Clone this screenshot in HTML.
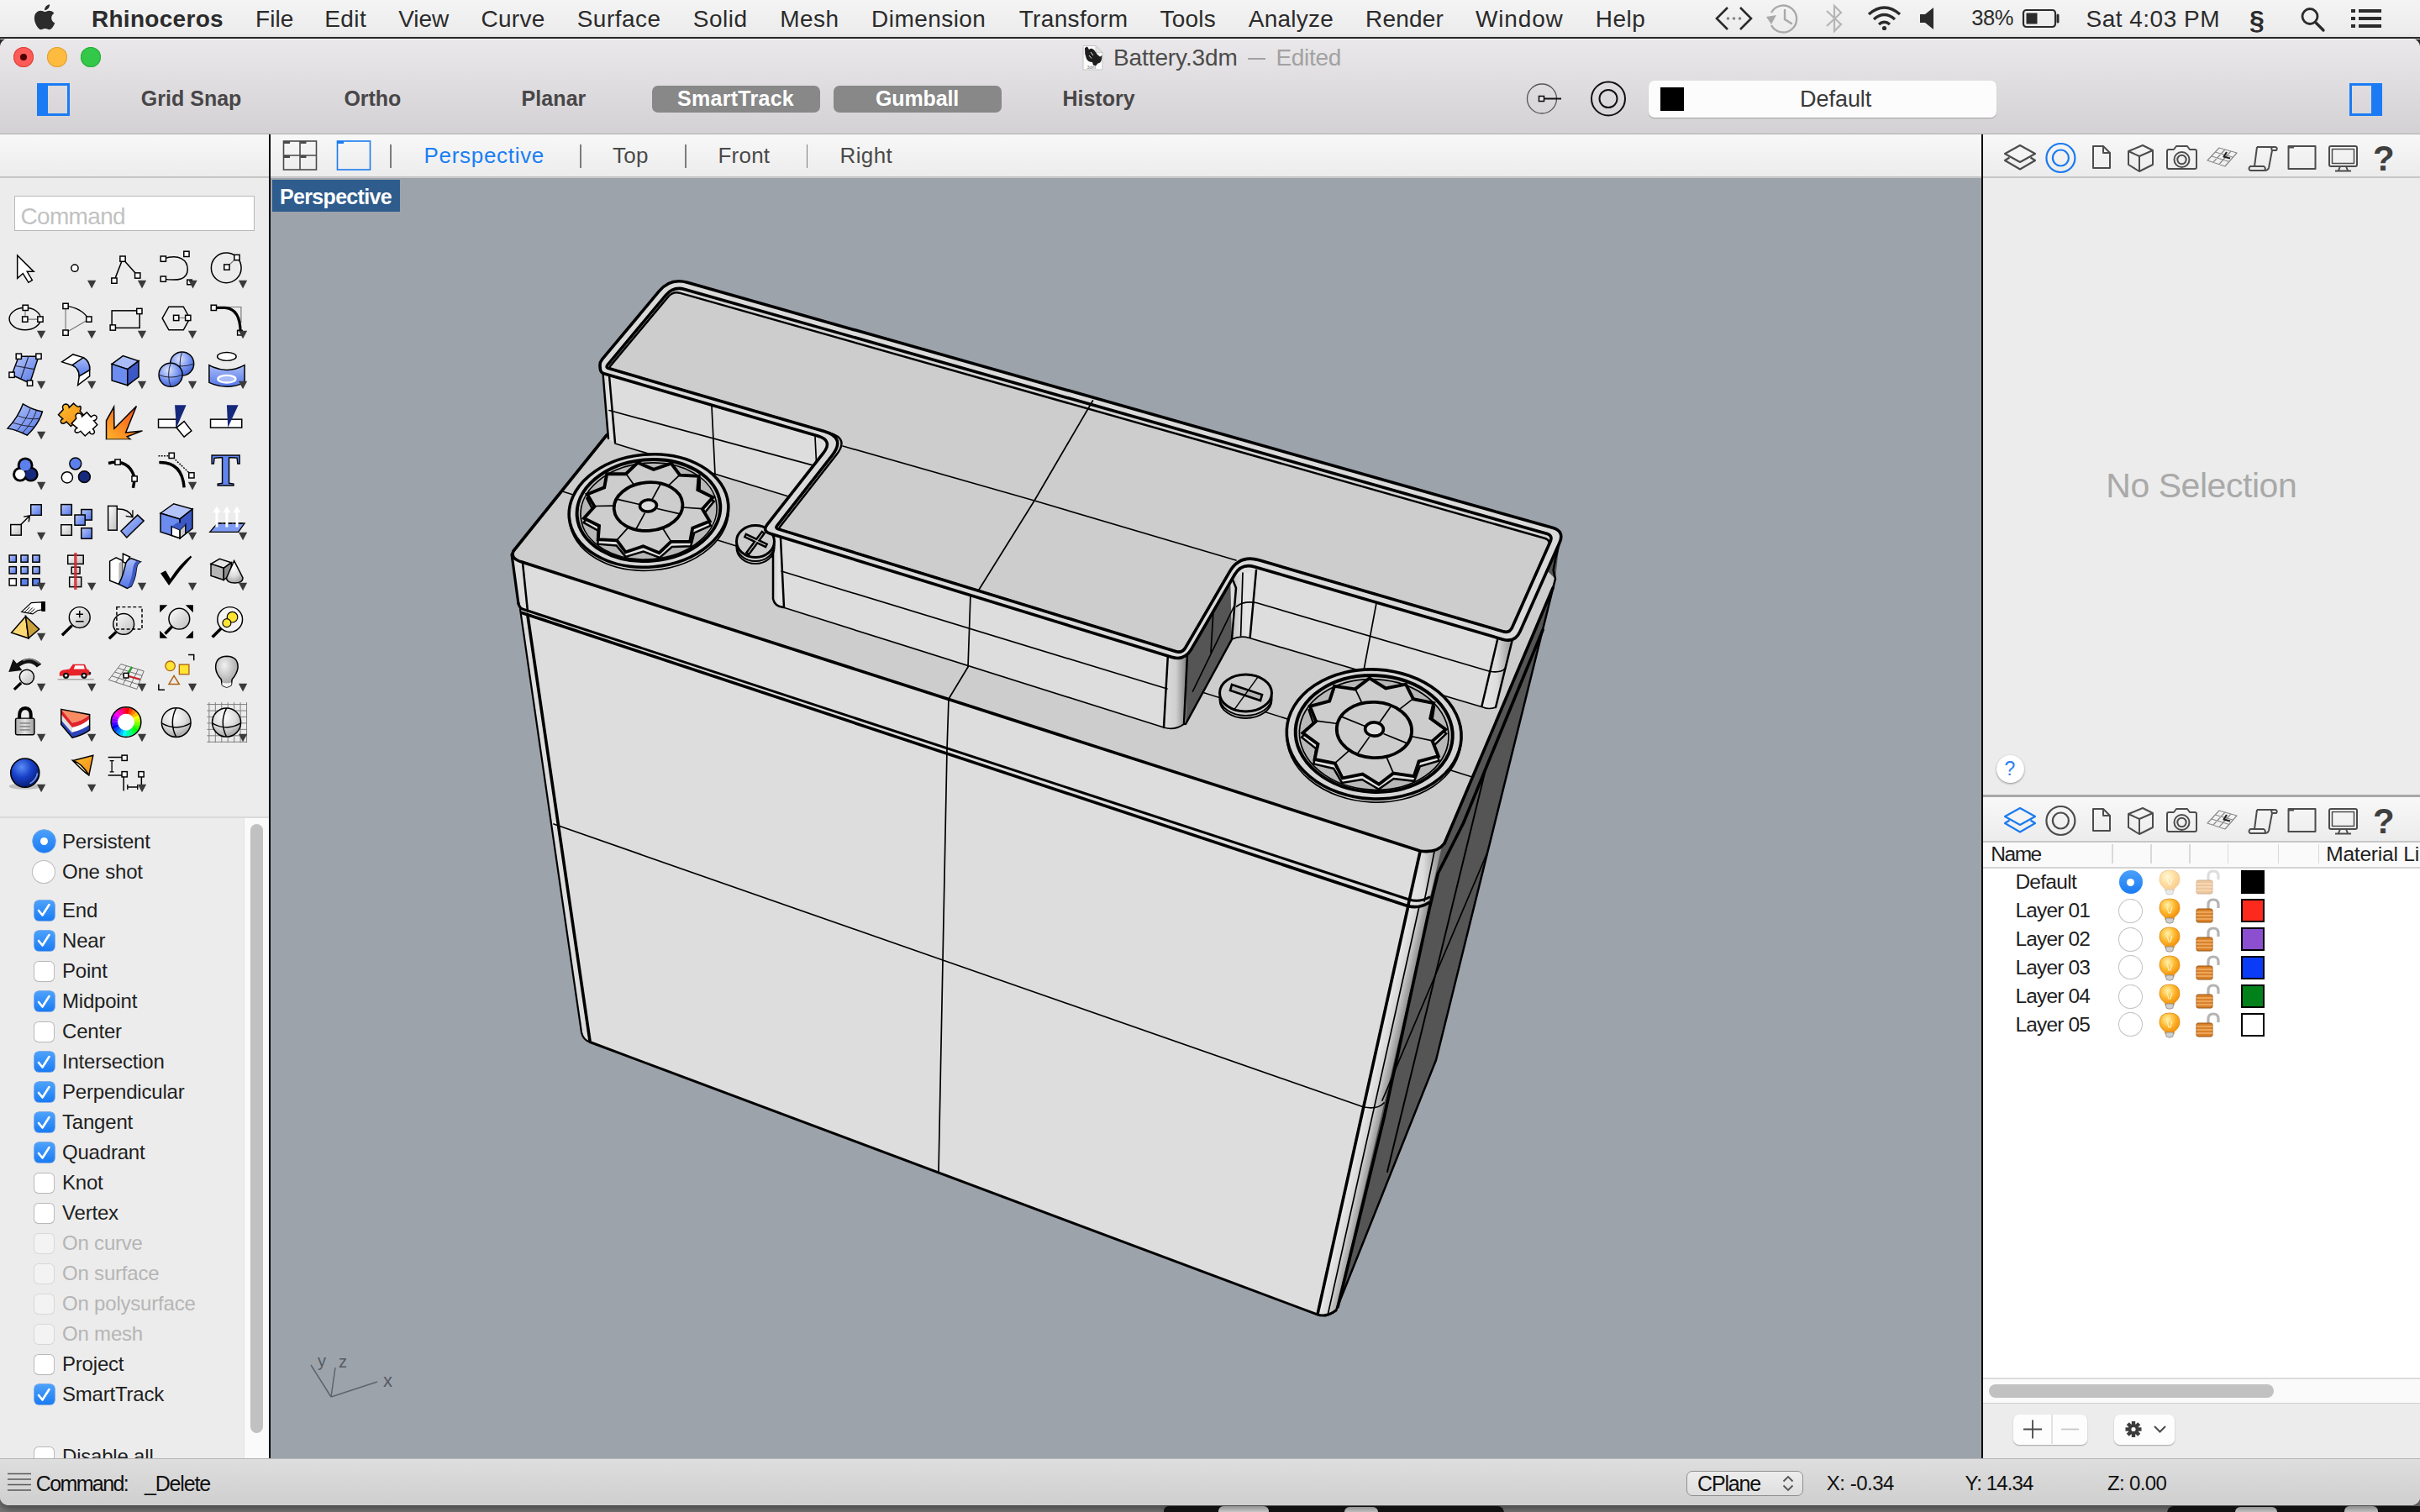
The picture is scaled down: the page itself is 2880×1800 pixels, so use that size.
<!DOCTYPE html>
<html><head><meta charset="utf-8"><title>Rhinoceros - Battery.3dm</title>
<style>
html,body{margin:0;padding:0}
body{width:2880px;height:1800px;position:relative;overflow:hidden;background:#2b2b2b;font-family:"Liberation Sans",sans-serif;}
.abs{position:absolute}
.t{position:absolute;white-space:pre;line-height:1.2}
svg{display:block;overflow:visible}
</style></head><body>

<div class="abs" style="left:0px;top:1780px;width:2880px;height:20px;background:#777777"></div>
<div class="abs" style="left:1385px;top:1792.5px;width:405px;height:8px;background:#161616;border-radius:10px 14px 0 0"></div>
<div class="abs" style="left:1450px;top:1793px;width:60px;height:7px;background:#d8d8d8;border-radius:6px 6px 0 0"></div>
<div class="abs" style="left:1600px;top:1794px;width:40px;height:6px;background:#cfcfcf;border-radius:6px 6px 0 0"></div>
<div class="abs" style="left:2579px;top:1792.5px;width:301px;height:8px;background:#161616;border-radius:12px 0 0 0"></div>
<div class="abs" style="left:2660px;top:1794px;width:50px;height:6px;background:#d0d0d0;border-radius:6px 6px 0 0"></div>
<div class="abs" style="left:2790px;top:1793px;width:40px;height:7px;background:#d0d0d0;border-radius:6px 6px 0 0"></div>
<div class="abs" style="left:0px;top:0px;width:2880px;height:44px;background:linear-gradient(#f4f4f4,#ebebeb)"></div>
<div class="abs" style="left:0px;top:44px;width:2880px;height:2px;background:#2a2a2a"></div>
<span id="t_0" class="t" style="left:108.9px;top:5.8px;font-size:28px;font-weight:700;color:#2b2b2b;letter-spacing:0.307px;">Rhinoceros</span>
<span id="t_1" class="t" style="left:304.0px;top:5.8px;font-size:28px;font-weight:400;color:#2b2b2b;letter-spacing:0.044px;">File</span>
<span id="t_2" class="t" style="left:386.2px;top:5.8px;font-size:28px;font-weight:400;color:#2b2b2b;letter-spacing:0.438px;">Edit</span>
<span id="t_3" class="t" style="left:474.2px;top:5.8px;font-size:28px;font-weight:400;color:#2b2b2b;letter-spacing:-0.022px;">View</span>
<span id="t_4" class="t" style="left:572.4px;top:5.8px;font-size:28px;font-weight:400;color:#2b2b2b;letter-spacing:0.299px;">Curve</span>
<span id="t_5" class="t" style="left:686.7px;top:5.8px;font-size:28px;font-weight:400;color:#2b2b2b;letter-spacing:0.486px;">Surface</span>
<span id="t_6" class="t" style="left:824.7px;top:5.8px;font-size:28px;font-weight:400;color:#2b2b2b;letter-spacing:0.527px;">Solid</span>
<span id="t_7" class="t" style="left:928.2px;top:5.8px;font-size:28px;font-weight:400;color:#2b2b2b;letter-spacing:0.458px;">Mesh</span>
<span id="t_8" class="t" style="left:1037.1px;top:5.8px;font-size:28px;font-weight:400;color:#2b2b2b;letter-spacing:0.447px;">Dimension</span>
<span id="t_9" class="t" style="left:1212.7px;top:5.8px;font-size:28px;font-weight:400;color:#2b2b2b;letter-spacing:0.350px;">Transform</span>
<span id="t_10" class="t" style="left:1380.5px;top:5.8px;font-size:28px;font-weight:400;color:#2b2b2b;letter-spacing:0.225px;">Tools</span>
<span id="t_11" class="t" style="left:1485.8px;top:5.8px;font-size:28px;font-weight:400;color:#2b2b2b;letter-spacing:0.225px;">Analyze</span>
<span id="t_12" class="t" style="left:1625.0px;top:5.8px;font-size:28px;font-weight:400;color:#2b2b2b;letter-spacing:0.176px;">Render</span>
<span id="t_13" class="t" style="left:1756.0px;top:5.8px;font-size:28px;font-weight:400;color:#2b2b2b;letter-spacing:0.851px;">Window</span>
<span id="t_14" class="t" style="left:1898.8px;top:5.8px;font-size:28px;font-weight:400;color:#2b2b2b;letter-spacing:0.477px;">Help</span>
<span id="t_15" class="t" style="left:2346.2px;top:6.0px;font-size:25.5px;font-weight:400;color:#2b2b2b;letter-spacing:-0.349px;">38%</span>
<span id="t_16" class="t" style="left:2482.5px;top:5.8px;font-size:28px;font-weight:400;color:#2b2b2b;letter-spacing:0.491px;">Sat 4:03 PM</span>
<span id="t_17" class="t" style="left:2677.0px;top:4.6px;font-size:32px;font-weight:700;color:#2b2b2b;letter-spacing:-1.797px;">§</span>
<div class="abs" style="left:0;top:46px;width:2880px;height:1745.5px;background:#ececec;border-radius:10px 10px 10px 10px;overflow:hidden;box-shadow:0 4px 10px rgba(0,0,0,.45)">
</div>
<div class="abs" style="left:0px;top:46px;width:2880px;height:113px;background:linear-gradient(#eae8ea,#d3d1d3);border-radius:10px 10px 0 0"></div>
<div class="abs" style="left:0px;top:46px;width:2880px;height:1px;background:#f6f6f6;border-radius:10px 10px 0 0;opacity:.8"></div>
<div class="abs" style="left:0px;top:159px;width:2880px;height:1px;background:#aeaeae"></div>
<div class="abs" style="left:16px;top:56px;width:24px;height:24px;border-radius:50%;background:#fc5b57;box-shadow:inset 0 0 0 1px #df3e39"></div>
<div class="abs" style="left:56px;top:56px;width:24px;height:24px;border-radius:50%;background:#fdbc40;box-shadow:inset 0 0 0 1px #de9f34"></div>
<div class="abs" style="left:96px;top:56px;width:24px;height:24px;border-radius:50%;background:#34c84a;box-shadow:inset 0 0 0 1px #27aa35"></div>
<div class="abs" style="left:24px;top:64px;width:8px;height:8px;border-radius:50%;background:#4c0102"></div>
<span id="t_18" class="t" style="left:1325.0px;top:52.1px;font-size:28px;font-weight:400;color:#4b4b4b;letter-spacing:-0.107px;">Battery.3dm</span>
<div class="abs" style="left:1484.6px;top:68.5px;width:21px;height:2px;background:#a3a1a3"></div>
<span id="t_19" class="t" style="left:1518.5px;top:52.1px;font-size:28px;font-weight:400;color:#a2a2a2;letter-spacing:-0.318px;">Edited</span>
<div class="abs" style="left:44px;top:99px;width:39px;height:39px;border:3px solid #1a7bf5;box-sizing:border-box;background:linear-gradient(90deg,#1a7bf5 0,#1a7bf5 10px,transparent 10px)"></div>
<div class="abs" style="left:2796px;top:99px;width:39px;height:39px;border:3px solid #1a7bf5;box-sizing:border-box;background:linear-gradient(270deg,#1a7bf5 0,#1a7bf5 10px,transparent 10px)"></div>
<span id="t_20" class="t" style="left:167.8px;top:101.8px;font-size:25px;font-weight:700;color:#484648;letter-spacing:0.015px;">Grid Snap</span>
<span id="t_21" class="t" style="left:409.4px;top:101.8px;font-size:25px;font-weight:700;color:#484648;letter-spacing:-0.049px;">Ortho</span>
<span id="t_22" class="t" style="left:620.6px;top:101.8px;font-size:25px;font-weight:700;color:#484648;letter-spacing:0.060px;">Planar</span>
<div class="abs" style="left:776px;top:102px;width:200px;height:32px;background:#888888;border-radius:7px"></div>
<span id="t_23" class="t" style="left:806.0px;top:101.8px;font-size:25px;font-weight:700;color:#fff;letter-spacing:0.280px;">SmartTrack</span>
<div class="abs" style="left:992px;top:102px;width:200px;height:32px;background:#888888;border-radius:7px"></div>
<span id="t_24" class="t" style="left:1042.0px;top:101.8px;font-size:25px;font-weight:700;color:#fff;letter-spacing:-0.145px;">Gumball</span>
<span id="t_25" class="t" style="left:1264.4px;top:101.8px;font-size:25px;font-weight:700;color:#484648;letter-spacing:0.023px;">History</span>
<div class="abs" style="left:1962px;top:96px;width:414px;height:44px;background:#fcfcfc;border-radius:7px;box-shadow:0 1px 1px rgba(0,0,0,.25)"></div>
<div class="abs" style="left:1976px;top:104px;width:28px;height:28px;background:#000"></div>
<span id="t_26" class="t" style="left:2142.0px;top:102.4px;font-size:27px;font-weight:400;color:#3a3a3a;letter-spacing:-0.037px;">Default</span>
<div class="abs" style="left:0px;top:160px;width:2880px;height:50px;background:linear-gradient(#f8f8f8,#ececec)"></div>
<div class="abs" style="left:0px;top:210px;width:2880px;height:2px;background:linear-gradient(#b9b9b9,#cfcfcf)"></div>
<span id="t_27" class="t" style="left:504.6px;top:170.3px;font-size:26px;font-weight:400;color:#1a7ff4;letter-spacing:0.687px;">Perspective</span>
<span id="t_28" class="t" style="left:729.0px;top:170.3px;font-size:26px;font-weight:400;color:#4a4a4a;letter-spacing:0.293px;">Top</span>
<span id="t_29" class="t" style="left:854.5px;top:170.3px;font-size:26px;font-weight:400;color:#4a4a4a;letter-spacing:0.222px;">Front</span>
<span id="t_30" class="t" style="left:999.6px;top:170.3px;font-size:26px;font-weight:400;color:#4a4a4a;letter-spacing:0.359px;">Right</span>
<div class="abs" style="left:464px;top:172px;width:1.5px;height:28px;background:#7c7c7c"></div>
<div class="abs" style="left:690px;top:172px;width:1.5px;height:28px;background:#7c7c7c"></div>
<div class="abs" style="left:815px;top:172px;width:1.5px;height:28px;background:#7c7c7c"></div>
<div class="abs" style="left:959.5px;top:172px;width:1.5px;height:28px;background:#7c7c7c"></div>
<svg class="abs" style="left:0;top:0" width="2880" height="212" viewBox="0 0 2880 212"><g transform="translate(41.5,4.5) scale(1.12)" fill="#2b2b2b"><path d="M17.6,15.1c0-3.4,2.8-5,2.9-5.1c-1.6-2.3-4-2.6-4.9-2.7c-2.1-0.2-4,1.2-5.1,1.2c-1,0-2.7-1.2-4.4-1.1C3.8,7.4,1.700,8.700,0.6,10.6c-2.400,4.100-0.600,10.200,1.700,13.500c1.100,1.600,2.500,3.500,4.200,3.400c1.700-0.100,2.300-1.100,4.400-1.100c2,0,2.600,1.100,4.400,1.100c1.800,0,3-1.600,4.100-3.300c1.300-1.900,1.800-3.700,1.900-3.800C21.200,20.400,17.700,19,17.600,15.100z"/><path d="M14.300,5c0.900-1.100,1.600-2.700,1.400-4.300c-1.300,0.100-3,0.900-3.900,2c-0.900,1-1.600,2.600-1.400,4.200C11.800,7,13.300,6.100,14.300,5z"/></g><g fill="none" stroke="#2b2b2b" stroke-width="2.6"><path d="M2056,9 L2043,22 L2056,35 M2071,9 L2084,22 L2071,35"/></g><g fill="#2b2b2b" opacity=".55"><circle cx="2056.5" cy="22" r="1.8"/><circle cx="2063.5" cy="22" r="1.8"/><circle cx="2070.500" cy="22" r="1.8"/></g><g fill="none" stroke="#a9a9a9" stroke-width="2.4"><path d="M2108,15 A16,16 0 1 1 2108,30"/><path d="M2124,12 L2124,23 L2132,28" stroke-linecap="round"/></g><path d="M2102,20 L2114,18 L2108,29 Z" fill="#a9a9a9"/><path d="M2174,13 L2191,29 L2183,37 L2183,7 L2191,15 L2174,31" fill="none" stroke="#b5b5b5" stroke-width="2.2"/><g fill="none" stroke="#2b2b2b" stroke-width="3.400"><path d="M2224,17 Q2242.5,1 2261,17"/><path d="M2230,23 Q2242.500,12 2255,23"/><path d="M2236,29 Q2242.500,23.5 2249,29"/></g><circle cx="2242.5" cy="33.500" r="2.6" fill="#2b2b2b"/><path d="M2285,17 L2291,17 L2301,9 L2301,35 L2291,27 L2285,27 Z" fill="#2b2b2b"/><rect x="2408" y="12" width="38" height="20" rx="3.500" fill="none" stroke="#2b2b2b" stroke-width="2.2"/><rect x="2411.500" y="15.500" width="13" height="13" fill="#2b2b2b"/><path d="M2449,18 L2449,26" stroke="#2b2b2b" stroke-width="3" stroke-linecap="round"/><circle cx="2749" cy="19.500" r="9" fill="none" stroke="#2b2b2b" stroke-width="2.800"/><path d="M2755.500,26.500 L2765,36" stroke="#2b2b2b" stroke-width="3.400" stroke-linecap="round"/><g fill="#2b2b2b"><rect x="2798" y="11" width="5" height="4"/><rect x="2807" y="11" width="27" height="4"/><rect x="2798" y="20" width="5" height="4"/><rect x="2807" y="20" width="27" height="4"/><rect x="2798" y="29" width="5" height="4"/><rect x="2807" y="29" width="27" height="4"/></g><g><path d="M1289,54.500 L1304,54.500 L1312,62.500 L1312,83 L1289,83 Z" fill="#fbfbfb" stroke="#c4c4c4" stroke-width="1"/><path d="M1304,54.500 L1304,62.500 L1312,62.500 Z" fill="#e4e4e4" stroke="#c4c4c4" stroke-width=".8"/><path d="M1291,57 L1294,55.500 L1296,59 Q1299,56.500 1302,59.500 L1306,65 L1309,67.500 L1311.500,66 L1311,71 Q1310,75 1306.500,75.500 L1304,78.500 L1301,77.500 L1300,74 Q1295,74 1293,70 Q1290.500,64 1291,57 Z" fill="#1e1e1e"/><path d="M1298,62 L1301,66 M1296,66 L1299,69.500" stroke="#e8e8e8" stroke-width="1"/><text x="1293.500" y="82" font-family="Liberation Sans,sans-serif" font-size="5.500" fill="#777">3dm</text></g><g fill="none" stroke="#111"><circle cx="1835" cy="117.500" r="17.500" stroke-width="1.300" stroke="#555"/><path d="M1838,117.500 L1858,117.500" stroke-width="2"/><rect x="1831.500" y="114.500" width="6" height="6" stroke-width="1.600" fill="#eee"/><circle cx="1914" cy="117.500" r="20" stroke-width="2"/><circle cx="1914" cy="117.500" r="10.500" stroke-width="2"/></g><g fill="none" stroke="#4a4a4a" stroke-width="1.600"><rect x="337.500" y="168" width="39" height="34"/><path d="M357,168 L357,202 M337.500,185 L376.500,185"/><path d="M338,169.500 L345,169.500 M357.500,169.500 L364.500,169.500 M338,186.500 L345,186.500 M357.500,186.500 L364.500,186.500" stroke-width="3"/></g><g fill="none" stroke="#1a7bf0" stroke-width="1.600"><rect x="401.500" y="168" width="39" height="34"/><path d="M402,169.500 L409,169.500" stroke-width="3"/></g></svg>
<div class="abs" style="left:0px;top:212px;width:320px;height:1524px;background:#ececec"></div>
<div class="abs" style="left:17px;top:233px;width:286px;height:42px;background:#fff;border:1.5px solid #b8b8b8;box-sizing:border-box"></div>
<span id="t_31" class="t" style="left:24.5px;top:240.5px;font-size:28px;font-weight:400;color:#c2c2c2;letter-spacing:-0.667px;">Command</span>
<div class="abs" style="left:0px;top:972px;width:320px;height:2px;background:#dadada"></div>
<div class="abs" style="left:0;top:974px;width:320px;height:762px;overflow:hidden">
<span id="t_32" class="t" style="left:74.0px;top:13.8px;font-size:24px;font-weight:400;color:#1f1f1f;letter-spacing:0.000px;letter-spacing:-0.2px;">Persistent</span>
<div class="abs" style="left:38.5px;top:14.200000000000045px;width:27px;height:27px;border-radius:50%;background:linear-gradient(#4ba0fa,#1a7bf3);box-shadow:0 0 0 .5px #1a6fe0"></div>
<div class="abs" style="left:47.5px;top:23.200000000000045px;width:9px;height:9px;border-radius:50%;background:#fff"></div>
<span id="t_33" class="t" style="left:74.0px;top:50.4px;font-size:24px;font-weight:400;color:#1f1f1f;letter-spacing:0.000px;letter-spacing:-0.2px;">One shot</span>
<div class="abs" style="left:39px;top:51.299999999999955px;width:26px;height:26px;border-radius:50%;background:#fff;box-shadow:0 0 0 1px #bdbdbd, 0 1px 1px rgba(0,0,0,.2)"></div>
<span id="t_34" class="t" style="left:74.0px;top:95.9px;font-size:24px;font-weight:400;color:#1f1f1f;letter-spacing:0.000px;letter-spacing:-0.2px;">End</span>
<div class="abs" style="left:40.5px;top:97.79999999999995px;width:24px;height:24px;border-radius:5px;background:linear-gradient(#4da2fb,#1a7bf3);box-shadow:0 0 0 .5px #1a6fe0"></div>
<svg class="abs" style="left:40px;top:97.29999999999995px" width="25" height="25" viewBox="0 0 25 25"><path d="M6,13 L10.5,18.5 L18.5,6" fill="none" stroke="#fff" stroke-width="2.6" stroke-linecap="round" stroke-linejoin="round"/></svg>
<span id="t_35" class="t" style="left:74.0px;top:131.9px;font-size:24px;font-weight:400;color:#1f1f1f;letter-spacing:0.000px;letter-spacing:-0.2px;">Near</span>
<div class="abs" style="left:40.5px;top:133.79999999999995px;width:24px;height:24px;border-radius:5px;background:linear-gradient(#4da2fb,#1a7bf3);box-shadow:0 0 0 .5px #1a6fe0"></div>
<svg class="abs" style="left:40px;top:133.29999999999995px" width="25" height="25" viewBox="0 0 25 25"><path d="M6,13 L10.5,18.5 L18.5,6" fill="none" stroke="#fff" stroke-width="2.6" stroke-linecap="round" stroke-linejoin="round"/></svg>
<span id="t_36" class="t" style="left:74.0px;top:168.4px;font-size:24px;font-weight:400;color:#1f1f1f;letter-spacing:0.000px;letter-spacing:-0.2px;">Point</span>
<div class="abs" style="left:41px;top:170.79999999999995px;width:23px;height:23px;border-radius:5px;background:#fff;box-shadow:0 0 0 1px #b9b9b9, 0 1px 1px rgba(0,0,0,.15)"></div>
<span id="t_37" class="t" style="left:74.0px;top:204.4px;font-size:24px;font-weight:400;color:#1f1f1f;letter-spacing:0.000px;letter-spacing:-0.2px;">Midpoint</span>
<div class="abs" style="left:40.5px;top:206.29999999999995px;width:24px;height:24px;border-radius:5px;background:linear-gradient(#4da2fb,#1a7bf3);box-shadow:0 0 0 .5px #1a6fe0"></div>
<svg class="abs" style="left:40px;top:205.79999999999995px" width="25" height="25" viewBox="0 0 25 25"><path d="M6,13 L10.5,18.5 L18.5,6" fill="none" stroke="#fff" stroke-width="2.6" stroke-linecap="round" stroke-linejoin="round"/></svg>
<span id="t_38" class="t" style="left:74.0px;top:240.3px;font-size:24px;font-weight:400;color:#1f1f1f;letter-spacing:0.000px;letter-spacing:-0.2px;">Center</span>
<div class="abs" style="left:41px;top:242.70000000000005px;width:23px;height:23px;border-radius:5px;background:#fff;box-shadow:0 0 0 1px #b9b9b9, 0 1px 1px rgba(0,0,0,.15)"></div>
<span id="t_39" class="t" style="left:74.0px;top:276.3px;font-size:24px;font-weight:400;color:#1f1f1f;letter-spacing:0.000px;letter-spacing:-0.2px;">Intersection</span>
<div class="abs" style="left:40.5px;top:278.20000000000005px;width:24px;height:24px;border-radius:5px;background:linear-gradient(#4da2fb,#1a7bf3);box-shadow:0 0 0 .5px #1a6fe0"></div>
<svg class="abs" style="left:40px;top:277.70000000000005px" width="25" height="25" viewBox="0 0 25 25"><path d="M6,13 L10.5,18.5 L18.5,6" fill="none" stroke="#fff" stroke-width="2.6" stroke-linecap="round" stroke-linejoin="round"/></svg>
<span id="t_40" class="t" style="left:74.0px;top:312.3px;font-size:24px;font-weight:400;color:#1f1f1f;letter-spacing:0.000px;letter-spacing:-0.2px;">Perpendicular</span>
<div class="abs" style="left:40.5px;top:314.20000000000005px;width:24px;height:24px;border-radius:5px;background:linear-gradient(#4da2fb,#1a7bf3);box-shadow:0 0 0 .5px #1a6fe0"></div>
<svg class="abs" style="left:40px;top:313.70000000000005px" width="25" height="25" viewBox="0 0 25 25"><path d="M6,13 L10.5,18.5 L18.5,6" fill="none" stroke="#fff" stroke-width="2.6" stroke-linecap="round" stroke-linejoin="round"/></svg>
<span id="t_41" class="t" style="left:74.0px;top:348.3px;font-size:24px;font-weight:400;color:#1f1f1f;letter-spacing:0.000px;letter-spacing:-0.2px;">Tangent</span>
<div class="abs" style="left:40.5px;top:350.20000000000005px;width:24px;height:24px;border-radius:5px;background:linear-gradient(#4da2fb,#1a7bf3);box-shadow:0 0 0 .5px #1a6fe0"></div>
<svg class="abs" style="left:40px;top:349.70000000000005px" width="25" height="25" viewBox="0 0 25 25"><path d="M6,13 L10.5,18.5 L18.5,6" fill="none" stroke="#fff" stroke-width="2.6" stroke-linecap="round" stroke-linejoin="round"/></svg>
<span id="t_42" class="t" style="left:74.0px;top:384.2px;font-size:24px;font-weight:400;color:#1f1f1f;letter-spacing:0.000px;letter-spacing:-0.2px;">Quadrant</span>
<div class="abs" style="left:40.5px;top:386.0999999999999px;width:24px;height:24px;border-radius:5px;background:linear-gradient(#4da2fb,#1a7bf3);box-shadow:0 0 0 .5px #1a6fe0"></div>
<svg class="abs" style="left:40px;top:385.5999999999999px" width="25" height="25" viewBox="0 0 25 25"><path d="M6,13 L10.5,18.5 L18.5,6" fill="none" stroke="#fff" stroke-width="2.6" stroke-linecap="round" stroke-linejoin="round"/></svg>
<span id="t_43" class="t" style="left:74.0px;top:420.2px;font-size:24px;font-weight:400;color:#1f1f1f;letter-spacing:0.000px;letter-spacing:-0.2px;">Knot</span>
<div class="abs" style="left:41px;top:422.5999999999999px;width:23px;height:23px;border-radius:5px;background:#fff;box-shadow:0 0 0 1px #b9b9b9, 0 1px 1px rgba(0,0,0,.15)"></div>
<span id="t_44" class="t" style="left:74.0px;top:456.2px;font-size:24px;font-weight:400;color:#1f1f1f;letter-spacing:0.000px;letter-spacing:-0.2px;">Vertex</span>
<div class="abs" style="left:41px;top:458.5999999999999px;width:23px;height:23px;border-radius:5px;background:#fff;box-shadow:0 0 0 1px #b9b9b9, 0 1px 1px rgba(0,0,0,.15)"></div>
<span id="t_45" class="t" style="left:74.0px;top:492.1px;font-size:24px;font-weight:400;color:#b5b5b5;letter-spacing:0.000px;letter-spacing:-0.2px;">On curve</span>
<div class="abs" style="left:41px;top:494.5px;width:23px;height:23px;border-radius:5px;background:#f3f3f3;box-shadow:0 0 0 1px #d8d8d8"></div>
<span id="t_46" class="t" style="left:74.0px;top:528.1px;font-size:24px;font-weight:400;color:#b5b5b5;letter-spacing:0.000px;letter-spacing:-0.2px;">On surface</span>
<div class="abs" style="left:41px;top:530.5px;width:23px;height:23px;border-radius:5px;background:#f3f3f3;box-shadow:0 0 0 1px #d8d8d8"></div>
<span id="t_47" class="t" style="left:74.0px;top:564.1px;font-size:24px;font-weight:400;color:#b5b5b5;letter-spacing:0.000px;letter-spacing:-0.2px;">On polysurface</span>
<div class="abs" style="left:41px;top:566.5px;width:23px;height:23px;border-radius:5px;background:#f3f3f3;box-shadow:0 0 0 1px #d8d8d8"></div>
<span id="t_48" class="t" style="left:74.0px;top:600.1px;font-size:24px;font-weight:400;color:#b5b5b5;letter-spacing:0.000px;letter-spacing:-0.2px;">On mesh</span>
<div class="abs" style="left:41px;top:602.5px;width:23px;height:23px;border-radius:5px;background:#f3f3f3;box-shadow:0 0 0 1px #d8d8d8"></div>
<span id="t_49" class="t" style="left:74.0px;top:636.1px;font-size:24px;font-weight:400;color:#1f1f1f;letter-spacing:0.000px;letter-spacing:-0.2px;">Project</span>
<div class="abs" style="left:41px;top:638.5px;width:23px;height:23px;border-radius:5px;background:#fff;box-shadow:0 0 0 1px #b9b9b9, 0 1px 1px rgba(0,0,0,.15)"></div>
<span id="t_50" class="t" style="left:74.0px;top:672.1px;font-size:24px;font-weight:400;color:#1f1f1f;letter-spacing:0.000px;letter-spacing:-0.2px;">SmartTrack</span>
<div class="abs" style="left:40.5px;top:674px;width:24px;height:24px;border-radius:5px;background:linear-gradient(#4da2fb,#1a7bf3);box-shadow:0 0 0 .5px #1a6fe0"></div>
<svg class="abs" style="left:40px;top:673.5px" width="25" height="25" viewBox="0 0 25 25"><path d="M6,13 L10.5,18.5 L18.5,6" fill="none" stroke="#fff" stroke-width="2.6" stroke-linecap="round" stroke-linejoin="round"/></svg>
<span id="t_51" class="t" style="left:74.0px;top:746.1px;font-size:24px;font-weight:400;color:#1f1f1f;letter-spacing:0.000px;letter-spacing:-0.2px;">Disable all</span>
<div class="abs" style="left:41px;top:748.5px;width:23px;height:23px;border-radius:5px;background:#fff;box-shadow:0 0 0 1px #b9b9b9, 0 1px 1px rgba(0,0,0,.15)"></div>
</div>
<div class="abs" style="left:290px;top:974px;width:30px;height:762px;background:#fafafa;border-left:1px solid #e3e3e3;box-sizing:border-box"></div>
<div class="abs" style="left:298px;top:981px;width:15px;height:725px;background:#c1c1c1;border-radius:8px"></div>
<svg class="abs" style="left:0;top:285px" width="320" height="690" viewBox="0 285 320 690"><defs><linearGradient id="ib" x1="0" y1="0" x2="1" y2="1"><stop offset="0" stop-color="#b9c8fa"/><stop offset="1" stop-color="#4f74e6"/></linearGradient><linearGradient id="ib2" x1="0" y1="0" x2="0" y2="1"><stop offset="0" stop-color="#a9bcf8"/><stop offset="1" stop-color="#5577e8"/></linearGradient><linearGradient id="ig" x1="0" y1="0" x2="1" y2="1"><stop offset="0" stop-color="#ffffff"/><stop offset="1" stop-color="#bdbdbd"/></linearGradient><linearGradient id="ior" x1="0" y1="1" x2="1" y2="0"><stop offset="0" stop-color="#ffb52a"/><stop offset="1" stop-color="#f4451b"/></linearGradient><linearGradient id="ior2" x1="0" y1="0" x2="1" y2="1"><stop offset="0" stop-color="#ffc02e"/><stop offset="1" stop-color="#f08a17"/></linearGradient><radialGradient id="isp" cx=".4" cy=".3" r=".8"><stop offset="0" stop-color="#dfe6fd"/><stop offset=".6" stop-color="#6a8bee"/><stop offset="1" stop-color="#3a56c0"/></radialGradient><radialGradient id="igs" cx=".42" cy=".3" r=".75"><stop offset="0" stop-color="#ffffff"/><stop offset=".55" stop-color="#dcdcdc"/><stop offset="1" stop-color="#9a9a9a"/></radialGradient><radialGradient id="ibb" cx=".38" cy=".3" r=".8"><stop offset="0" stop-color="#5b8cf5"/><stop offset=".45" stop-color="#1740c8"/><stop offset="1" stop-color="#04125a"/></radialGradient><radialGradient id="ibulb" cx=".4" cy=".3" r=".8"><stop offset="0" stop-color="#f2f2f2"/><stop offset=".6" stop-color="#b8b8b8"/><stop offset="1" stop-color="#8a8a8a"/></radialGradient><linearGradient id="ilk" x1="0" y1="0" x2="1" y2="0"><stop offset="0" stop-color="#a8a8a8"/><stop offset=".5" stop-color="#e2e2e2"/><stop offset="1" stop-color="#9c9c9c"/></linearGradient><linearGradient id="iye" x1="0" y1="0" x2="1" y2="0"><stop offset="0" stop-color="#ffe58a"/><stop offset="1" stop-color="#d9a93a"/></linearGradient></defs><g transform="translate(0,285) scale(0.165375)" stroke-linejoin="miter"><path d="M125,115 L125,280 L165,245 L205,310 L232,293 L195,232 L243,232 Z" fill="#fff" stroke="#000" stroke-width="9" stroke-width="10"/><circle cx="538" cy="207" r="25" fill="#fff" stroke="#000" stroke-width="9"/><path d="M629,295 L691,295 L660,353 Z" fill="#3a3a3a"/><path d="M822,297 L883,140 L990,260" fill="none" stroke="#000" stroke-width="9"/><rect x="803.0" y="278.0" width="38" height="38" fill="#fff" stroke="#000" stroke-width="9"/><rect x="864.0" y="121.0" width="38" height="38" fill="#fff" stroke="#000" stroke-width="9"/><rect x="971.0" y="241.0" width="38" height="38" fill="#fff" stroke="#000" stroke-width="9"/><path d="M991,295 L1053,295 L1022,353 Z" fill="#3a3a3a"/><path d="M1175,140 C1290,100 1350,150 1350,215 C1350,290 1280,300 1175,285" fill="none" stroke="#000" stroke-width="9"/><rect x="1156.0" y="121.0" width="38" height="38" fill="#fff" stroke="#000" stroke-width="9"/><rect x="1323.0" y="86.0" width="38" height="38" fill="#fff" stroke="#000" stroke-width="9"/><rect x="1156.0" y="266.0" width="38" height="38" fill="#fff" stroke="#000" stroke-width="9"/><rect x="1347.0" y="291.0" width="34" height="34" fill="#fff" stroke="#000" stroke-width="9"/><path d="M1357,295 L1419,295 L1388,353 Z" fill="#3a3a3a"/><circle cx="1628" cy="205" r="108" fill="none" stroke="#000" stroke-width="9"/><path d="M1632,200 L1705,130" stroke="#777" stroke-width="7"/><rect x="1613.0" y="181.0" width="38" height="38" fill="#fff" stroke="#000" stroke-width="9"/><rect x="1686.0" y="111.0" width="38" height="38" fill="#fff" stroke="#000" stroke-width="9"/><path d="M1717,295 L1779,295 L1748,353 Z" fill="#3a3a3a"/><ellipse cx="180" cy="572" rx="113" ry="80" fill="none" stroke="#000" stroke-width="9"/><path d="M183,492 L180,575 L290,575" fill="none" stroke="#777" stroke-width="7"/><rect x="164.0" y="473.0" width="38" height="38" fill="#fff" stroke="#000" stroke-width="9"/><rect x="161.0" y="556.0" width="38" height="38" fill="#fff" stroke="#000" stroke-width="9"/><rect x="271.0" y="556.0" width="38" height="38" fill="#fff" stroke="#000" stroke-width="9"/><path d="M266,657 L328,657 L297,715 Z" fill="#3a3a3a"/><path d="M472,480 L472,672 L640,575" fill="none" stroke="#777" stroke-width="7"/><path d="M472,480 Q585,490 640,575" fill="none" stroke="#000" stroke-width="9"/><rect x="453.0" y="461.0" width="38" height="38" fill="#fff" stroke="#000" stroke-width="9"/><rect x="621.0" y="556.0" width="38" height="38" fill="#fff" stroke="#000" stroke-width="9"/><rect x="453.0" y="653.0" width="38" height="38" fill="#fff" stroke="#000" stroke-width="9"/><path d="M629,657 L691,657 L660,715 Z" fill="#3a3a3a"/><rect x="805" y="513" width="200" height="124" fill="none" stroke="#000" stroke-width="9"/><rect x="984.0" y="498.0" width="38" height="38" fill="#fff" stroke="#000" stroke-width="9"/><rect x="793.0" y="616.0" width="38" height="38" fill="#fff" stroke="#000" stroke-width="9"/><path d="M991,657 L1053,657 L1022,715 Z" fill="#3a3a3a"/><path d="M1168,568 L1215,485 L1320,485 L1366,568 L1320,652 L1215,652 Z" fill="none" stroke="#000" stroke-width="9"/><path d="M1268,565 L1353,565" stroke="#777" stroke-width="7"/><rect x="1249.0" y="546.0" width="38" height="38" fill="#fff" stroke="#000" stroke-width="9"/><rect x="1334.0" y="546.0" width="38" height="38" fill="#fff" stroke="#000" stroke-width="9"/><path d="M1354,657 L1416,657 L1385,715 Z" fill="#3a3a3a"/><path d="M1620,487 L1735,487 L1735,600" fill="none" stroke="#777" stroke-width="7"/><path d="M1540,492 L1620,492 Q1730,500 1730,670" fill="none" stroke="#000" stroke-width="19"/><rect x="1519.0" y="473.0" width="38" height="38" fill="#fff" stroke="#000" stroke-width="9"/><rect x="1709.0" y="655.0" width="34" height="34" fill="#fff" stroke="#000" stroke-width="9"/><path d="M1717,657 L1779,657 L1748,715 Z" fill="#3a3a3a"/><path d="M135,842 L278,842 L215,1035 L85,975 Z" fill="url(#ib)" stroke="#000" stroke-width="9"/><path d="M205,842 L150,1005 M110,910 L248,935" fill="none" stroke="#223" stroke-width="7"/><rect x="116.0" y="823.0" width="38" height="38" fill="#fff" stroke="#000" stroke-width="9"/><rect x="259.0" y="823.0" width="38" height="38" fill="#fff" stroke="#000" stroke-width="9"/><rect x="196.0" y="1016.0" width="38" height="38" fill="#fff" stroke="#000" stroke-width="9"/><rect x="66.0" y="956.0" width="38" height="38" fill="#fff" stroke="#000" stroke-width="9"/><path d="M266,1020 L328,1020 L297,1078 Z" fill="#3a3a3a"/><path d="M445,882 L525,828 L600,850 Q650,880 645,940 L645,985 L560,1050 L570,985 Q570,930 520,905 Z" fill="#fff" stroke="#000" stroke-width="9"/><path d="M520,905 L600,850 Q650,880 645,940 L570,985 Q570,930 520,905Z" fill="url(#ib2)" stroke="#000" stroke-width="9"/><path d="M629,1020 L691,1020 L660,1078 Z" fill="#3a3a3a"/><path d="M805,897 L885,838 L998,875 L918,935 Z" fill="#a9bcf8" stroke="#000" stroke-width="9"/><path d="M805,897 L918,935 L918,1050 L805,1015 Z" fill="#6c8cf0" stroke="#000" stroke-width="9"/><path d="M918,935 L998,875 L998,990 L918,1050 Z" fill="#3c58c4" stroke="#000" stroke-width="9"/><path d="M991,1020 L1053,1020 L1022,1078 Z" fill="#3a3a3a"/><circle cx="1310" cy="895" r="85" fill="url(#isp)" stroke="#000" stroke-width="9"/><path d="M1225,895 Q1310,930 1395,895 M1310,810 Q1280,895 1310,980" fill="none" stroke="#223" stroke-width="6"/><circle cx="1228" cy="975" r="85" fill="url(#isp)" stroke="#000" stroke-width="9"/><path d="M1143,975 Q1228,1010 1313,975 M1228,890 Q1198,975 1228,1060" fill="none" stroke="#223" stroke-width="6"/><path d="M1354,1020 L1416,1020 L1385,1078 Z" fill="#3a3a3a"/><ellipse cx="1632" cy="843" rx="68" ry="30" fill="#fff" stroke="#000" stroke-width="9"/><path d="M1505,905 Q1632,975 1760,905 L1760,1030 Q1632,1090 1505,1030 Z" fill="url(#ib2)" stroke="#000" stroke-width="9"/><ellipse cx="1632" cy="1005" rx="64" ry="26" fill="#a9bcf8" stroke="#fff" stroke-width="14"/><path d="M1717,1020 L1779,1020 L1748,1078 Z" fill="#3a3a3a"/><path d="M165,1185 Q240,1230 305,1240 Q280,1330 195,1410 Q120,1370 55,1360 Q130,1280 165,1185 Z" fill="url(#ib)" stroke="#000" stroke-width="9"/><path d="M222,1210 Q190,1300 118,1382 M262,1232 Q235,1320 160,1395 M125,1268 Q200,1300 290,1290 M92,1320 Q170,1345 250,1350" fill="none" stroke="#223" stroke-width="6"/><path d="M266,1383 L328,1383 L297,1441 Z" fill="#3a3a3a"/><path d="M420,1262 L455,1225 Q440,1195 470,1185 Q495,1185 498,1210 L530,1180 Q560,1215 575,1200 Q590,1205 575,1235 L600,1262 L565,1300 Q590,1320 570,1335 Q545,1340 540,1318 L510,1345 L478,1312 Q455,1335 440,1320 Q430,1300 452,1292 Z" fill="url(#ior2)" stroke="#000" stroke-width="9" stroke-width="8"/><path d="M515,1325 L550,1288 Q535,1262 560,1252 Q590,1250 590,1275 L625,1245 L655,1278 Q680,1255 695,1275 Q700,1300 675,1305 L700,1335 L668,1365 Q690,1385 672,1400 Q648,1405 645,1385 L612,1415 L580,1380 Q555,1400 540,1385 Q535,1365 555,1358 Z" fill="#fff" stroke="#000" stroke-width="9" stroke-width="8"/><path d="M765,1440 L765,1305 L820,1205 L822,1362 L982,1200 L905,1390 L1025,1378 L915,1420 L940,1440 Z" fill="url(#ior)" stroke="#000" stroke-width="9"/><rect x="760" y="1441" width="200" height="12" fill="#ececec"/><rect x="1140" y="1295" width="130" height="60" fill="#fff" stroke="#000" stroke-width="9"/><path d="M1270,1355 L1325,1310 L1378,1378 L1325,1422 Z" fill="#fff" stroke="#000" stroke-width="9"/><path d="M1258,1193 L1340,1193 L1270,1355 Z" fill="#14287c"/><rect x="1515" y="1295" width="225" height="60" fill="#fff" stroke="#000" stroke-width="9"/><path d="M1632,1193 L1715,1193 L1640,1355 Z" fill="#14287c"/></g><g transform="translate(0,525) scale(0.165375)"><g stroke="#000" stroke-width="24" fill="#000"><circle cx="182" cy="175" r="45"/><circle cx="145" cy="240" r="42"/><circle cx="222" cy="240" r="42"/></g><circle cx="222" cy="240" r="40" fill="#152a7c"/><circle cx="145" cy="240" r="36" fill="#fff"/><circle cx="182" cy="175" r="40" fill="#5b80ee"/><path d="M266,295 L328,295 L297,353 Z" fill="#3a3a3a"/><circle cx="543" cy="163" r="42" fill="#5b80ee" stroke="#000" stroke-width="9"/><circle cx="483" cy="262" r="40" fill="#fff" stroke="#000" stroke-width="9"/><circle cx="607" cy="258" r="42" fill="#152a7c" stroke="#000" stroke-width="9"/><path d="M780,160 Q930,125 970,270 L958,338" fill="none" stroke="#000" stroke-width="21"/><rect x="828.0" y="133.0" width="38" height="38" fill="#fff" stroke="#000" stroke-width="9"/><rect x="949.0" y="253.0" width="38" height="38" fill="#fff" stroke="#000" stroke-width="9"/><path d="M1145,155 Q1310,150 1325,335" fill="none" stroke="#000" stroke-width="21"/><path d="M1140,108 L1215,108 M1262,135 L1362,230" stroke="#000" stroke-width="9" stroke-dasharray="11 9" fill="none"/><rect x="1216.0" y="86.0" width="38" height="38" fill="#fff" stroke="#000" stroke-width="9"/><rect x="1359.0" y="228.0" width="38" height="38" fill="#fff" stroke="#000" stroke-width="9"/><path d="M1354,295 L1416,295 L1385,353 Z" fill="#3a3a3a"/><text x="1520" y="318" font-family="Liberation Serif,serif" font-weight="700" font-size="330" fill="#5f85f0" stroke="#000" stroke-width="9" textLength="210" lengthAdjust="spacingAndGlyphs">T</text><rect x="77" y="602" width="76" height="76" fill="url(#ig)" stroke="#000" stroke-width="9"/><rect x="222" y="458" width="76" height="76" fill="url(#ib)" stroke="#000" stroke-width="9"/><path d="M150,602 L212,540 M170,545 L214,538 L207,582" fill="none" stroke="#000" stroke-width="9"/><path d="M266,657 L328,657 L297,715 Z" fill="#3a3a3a"/><rect x="440" y="457" width="76" height="76" fill="url(#ib)" stroke="#000" stroke-width="9"/><rect x="440" y="603" width="76" height="76" fill="url(#ig)" stroke="#000" stroke-width="9"/><rect x="585" y="493" width="76" height="76" fill="url(#ib)" stroke="#000" stroke-width="9"/><rect x="538" y="532" width="74" height="74" fill="url(#ib)" stroke="#000" stroke-width="9"/><rect x="585" y="627" width="76" height="76" fill="url(#ib)" stroke="#000" stroke-width="9"/><rect x="778" y="468" width="64" height="174" fill="url(#ig)" stroke="#000" stroke-width="9"/><path d="M870,648 L990,533 L1035,575 L912,695 Z" fill="url(#ib)" stroke="#000" stroke-width="9"/><path d="M845,490 Q925,488 952,545 M905,540 L955,548 L955,498" fill="none" stroke="#000" stroke-width="8"/><path d="M1155,520 L1250,452 L1385,490 L1295,562 Z" fill="#b4c4fa" stroke="#000" stroke-width="9"/><path d="M1155,520 L1295,562 L1295,700 L1155,655 Z" fill="#6c8cf0" stroke="#000" stroke-width="9"/><path d="M1295,562 L1385,490 L1385,630 L1295,700 Z" fill="#3c58c4" stroke="#000" stroke-width="9"/><path d="M1235,615 L1295,640 L1295,700 L1235,680 Z" fill="#fff" stroke="#000" stroke-width="9"/><path d="M1295,640 L1335,600 L1335,668 L1295,700 Z" fill="#ccc" stroke="#000" stroke-width="9"/><path d="M1235,615 L1280,585 L1335,600 L1295,640Z" fill="#3c58c4"/><path d="M1354,657 L1416,657 L1385,715 Z" fill="#3a3a3a"/><path d="M1510,655 L1565,592 L1760,592 L1715,655 Z" fill="#7f9cf3" stroke="#000" stroke-width="8"/><path d="M1570,592 L1755,592" stroke="#000" stroke-width="9" stroke-dasharray="24 14"/><path d="M1551,620 L1551,515 L1532,515 L1560,470 L1588,515 L1569,515 L1569,620 Z" fill="#fff"/><path d="M1623,620 L1623,515 L1604,515 L1632,470 L1660,515 L1641,515 L1641,620 Z" fill="#fff"/><path d="M1696,620 L1696,515 L1677,515 L1705,470 L1733,515 L1714,515 L1714,620 Z" fill="#fff"/><path d="M1717,657 L1779,657 L1748,715 Z" fill="#3a3a3a"/><rect x="67" y="822" width="50" height="50" fill="url(#ib)" stroke="#000" stroke-width="9"/><rect x="67" y="905" width="50" height="50" fill="url(#ib)" stroke="#000" stroke-width="9"/><rect x="67" y="990" width="50" height="50" fill="#fff" stroke="#000" stroke-width="9"/><rect x="151" y="822" width="50" height="50" fill="url(#ib)" stroke="#000" stroke-width="9"/><rect x="151" y="905" width="50" height="50" fill="url(#ib)" stroke="#000" stroke-width="9"/><rect x="151" y="990" width="50" height="50" fill="#5b80ee" stroke="#000" stroke-width="9"/><rect x="235" y="822" width="50" height="50" fill="url(#ib)" stroke="#000" stroke-width="9"/><rect x="235" y="905" width="50" height="50" fill="url(#ib)" stroke="#000" stroke-width="9"/><rect x="235" y="990" width="50" height="50" fill="#5b80ee" stroke="#000" stroke-width="9"/><path d="M266,1020 L328,1020 L297,1078 Z" fill="#3a3a3a"/><rect x="488" y="823" width="112" height="62" fill="url(#ig)" stroke="#000" stroke-width="9"/><rect x="515" y="908" width="60" height="47" fill="url(#ig)" stroke="#000" stroke-width="9"/><rect x="500" y="980" width="85" height="70" fill="url(#ig)" stroke="#000" stroke-width="9"/><rect x="533" y="805" width="21" height="265" fill="#d8232e" opacity=".85"/><path d="M629,1020 L691,1020 L660,1078 Z" fill="#3a3a3a"/><path d="M790,865 L835,840 L880,860 L880,1020 L855,1030 L790,1005 Z" fill="#fff" stroke="#000" stroke-width="9"/><path d="M855,880 L880,860 L880,1020 L855,1030Z" fill="#bbb"/><path d="M885,812 L935,835 L905,880 L885,870Z" fill="#fff" stroke="#000" stroke-width="9"/><path d="M905,880 Q920,850 945,845 L1010,870 Q985,880 980,930 Q975,990 945,1045 L915,1060 L855,1030 Q890,960 905,880 Z" fill="url(#ib2)" stroke="#000" stroke-width="9"/><path d="M1010,870 Q985,880 980,930 Q975,990 945,1045 L915,1060 Q950,990 955,930 Q960,880 985,862Z" fill="#3c58c4"/><path d="M991,1020 L1053,1020 L1022,1078 Z" fill="#3a3a3a"/><path d="M1155,952 L1192,932 L1226,992 Q1290,890 1372,826 L1380,836 Q1292,930 1216,1040 Z" fill="#000"/><path d="M1354,1020 L1416,1020 L1385,1078 Z" fill="#3a3a3a"/><path d="M1518,885 L1580,848 L1665,875 L1610,915 Z" fill="#e6e6e6" stroke="#000" stroke-width="9"/><path d="M1518,885 L1610,915 L1610,1000 L1518,970 Z" fill="#b5b5b5" stroke="#000" stroke-width="9"/><path d="M1610,915 L1665,875 L1665,960 L1610,1000 Z" fill="#8c8c8c" stroke="#000" stroke-width="9"/><path d="M1685,862 L1748,985 Q1748,1020 1690,1022 Q1630,1020 1630,985 Z" fill="url(#igs)" stroke="#000" stroke-width="9"/><path d="M1717,1020 L1779,1020 L1748,1078 Z" fill="#3a3a3a"/><path d="M82,1380 L185,1262 L205,1420 Z" fill="#fbd873" stroke="#000" stroke-width="9"/><path d="M185,1262 L282,1355 L205,1420 Z" fill="#c9a03c" stroke="#000" stroke-width="9"/><path d="M155,1230 L225,1165 L300,1160 L300,1215 L270,1220 L235,1245 Z" fill="#fff" stroke="#000" stroke-width="7"/><path d="M175,1235 L215,1195 M195,1240 L235,1200 M215,1242 L250,1208" stroke="#000" stroke-width="6"/><rect x="298" y="1155" width="28" height="72" fill="#000"/><path d="M266,1383 L328,1383 L297,1441 Z" fill="#3a3a3a"/><path d="M518,1328 L447,1398" stroke="#000" stroke-width="21"/><circle cx="573" cy="1270" r="75" fill="url(#ig)" stroke="#000" stroke-width="9"/><path d="M573,1222 L573,1272 M548,1247 L598,1247 M545,1298 L602,1298" stroke="#000" stroke-width="9"/><path d="M835,1375 L785,1422" stroke="#000" stroke-width="21"/><circle cx="890" cy="1318" r="75" fill="url(#ig)" stroke="#000" stroke-width="9"/><rect x="840" y="1195" width="182" height="160" fill="none" stroke="#000" stroke-width="9" stroke-dasharray="24 15"/><path d="M1237,1336 L1188,1388" stroke="#000" stroke-width="21"/><circle cx="1290" cy="1280" r="75" fill="url(#ig)" stroke="#000" stroke-width="9"/><path d="M1150,1180 L1205,1180 L1150,1235Z M1390,1180 L1335,1180 L1390,1235Z M1150,1420 L1205,1420 L1150,1365Z M1390,1420 L1335,1420 L1390,1365Z" fill="#000"/><path d="M1592,1348 L1528,1412" stroke="#000" stroke-width="21"/><circle cx="1655" cy="1285" r="90" fill="#f4f4f4" stroke="#000" stroke-width="9"/><circle cx="1672" cy="1268" r="38" fill="#ffe433" stroke="#000" stroke-width="7"/><circle cx="1632" cy="1310" r="30" fill="#ffe433" stroke="#000" stroke-width="7"/></g><g transform="translate(0,765) scale(0.165375)"><path d="M152,290 L102,338" stroke="#000" stroke-width="20"/><circle cx="193" cy="247" r="52" fill="url(#ig)" stroke="#000" stroke-width="9"/><path d="M298,155 Q215,75 120,150 L95,120 L62,212 L160,200 L140,172 Q215,120 265,178 Z" fill="#111"/><path d="M285,150 Q225,100 165,130" fill="none" stroke="#777" stroke-width="10"/><path d="M266,295 L328,295 L297,353 Z" fill="#3a3a3a"/><path d="M415,265 L675,265" stroke="#999" stroke-width="7"/><path d="M428,225 Q425,200 470,195 L500,190 L525,155 L610,155 L625,190 Q650,195 648,235 L428,240 Z" fill="#e8222a"/><path d="M540,165 L602,165 L610,190 L530,190Z" fill="#fff"/><rect x="640" y="212" width="14" height="18" fill="#222"/><circle cx="475" cy="238" r="22" fill="#111"/><circle cx="475" cy="238" r="9" fill="#eee"/><circle cx="605" cy="238" r="22" fill="#111"/><circle cx="605" cy="238" r="9" fill="#eee"/><path d="M629,295 L691,295 L660,353 Z" fill="#3a3a3a"/><path d="M870,155 L1035,205 M870,155 L782,268 M848,183 L1022,238 M911,168 L833,285 M826,212 L1010,270 M952,180 L884,302 M804,240 L998,302 M994,192 L934,318 M782,268 L985,335 M1035,205 L985,335" stroke="#555" stroke-width="5" fill="none"/><path d="M910,237 L1008,265" stroke="#d0202a" stroke-width="13"/><path d="M910,237 L950,175" stroke="#22a32a" stroke-width="13"/><rect x="890.0" y="220.0" width="34" height="34" fill="#fff" stroke="#000" stroke-width="9"/><path d="M991,295 L1053,295 L1022,353 Z" fill="#3a3a3a"/><circle cx="1225" cy="168" r="35" fill="#ffe433" stroke="#b0610f" stroke-width="8"/><rect x="1290" y="158" width="70" height="70" fill="#ffe433" stroke="#b0610f" stroke-width="8"/><path d="M1215,300 L1252,238 L1290,300 Z" fill="none" stroke="#b0610f" stroke-width="9"/><path d="M1355,88 L1395,88 L1395,128 M1142,300 L1142,340 L1185,340" fill="none" stroke="#000" stroke-width="9"/><path d="M1354,295 L1416,295 L1385,353 Z" fill="#3a3a3a"/><path d="M1632,98 Q1715,100 1712,182 Q1705,225 1670,265 L1665,305 Q1632,335 1598,305 L1592,265 Q1555,225 1552,182 Q1550,100 1632,98 Z" fill="url(#ibulb)" stroke="#000" stroke-width="9"/><path d="M1600,285 Q1632,300 1665,285 L1665,305 Q1632,335 1598,305Z" fill="#f4f4f4"/><path d="M1717,295 L1779,295 L1748,353 Z" fill="#3a3a3a"/><path d="M140,550 L140,520 Q142,475 182,472 Q222,475 222,520 L222,550" fill="none" stroke="#000" stroke-width="24"/><rect x="112" y="545" width="135" height="118" rx="10" fill="url(#ilk)" stroke="#000" stroke-width="9"/><path d="M142,580 L218,580 M142,604 L218,604 M142,628 L218,628" stroke="#8f8f8f" stroke-width="11"/><path d="M266,657 L328,657 L297,715 Z" fill="#3a3a3a"/><path d="M440,480 L645,518 Q600,560 520,578 Z" fill="#fa8c62"/><path d="M440,480 L520,578 L520,685 L440,590 Z" fill="#e0e0e0"/><path d="M520,578 Q600,560 645,518 L645,630 Q600,665 520,685 Z" fill="#fff"/><path d="M520,578 Q600,560 645,518 L645,548 Q600,592 520,610Z" fill="#e0242a"/><path d="M520,645 Q600,628 645,590 L645,630 Q600,665 520,685Z" fill="#2b44b8"/><path d="M440,480 L520,578 L520,610 L440,515Z" fill="#e0242a"/><path d="M440,560 L520,650 L520,685 L440,590Z" fill="#2b44b8"/><path d="M440,480 L645,518 L645,630 Q600,665 520,685 L440,590 Z" fill="none" stroke="#000" stroke-width="9"/><path d="M629,657 L691,657 L660,715 Z" fill="#3a3a3a"/><path d="M907.0,467.0 L936.2,471.1 L923.7,514.4 L907.0,512.0Z" fill="hsl(0,100%,50%)"/><path d="M934.2,470.6 L961.3,482.1 L938.0,520.6 L922.5,514.0Z" fill="hsl(15,100%,50%)"/><path d="M959.5,481.1 L982.7,499.3 L950.3,530.4 L937.0,520.0Z" fill="hsl(30,100%,50%)"/><path d="M981.2,497.8 L999.0,521.3 L959.6,543.0 L949.4,529.6Z" fill="hsl(45,100%,50%)"/><path d="M997.9,519.5 L1008.9,546.9 L965.3,557.6 L959.0,542.0Z" fill="hsl(60,100%,50%)"/><path d="M1008.4,544.8 L1012.0,574.1 L967.0,573.2 L965.0,556.5Z" fill="hsl(75,100%,50%)"/><path d="M1012.0,572.0 L1007.9,601.2 L964.6,588.7 L967.0,572.0Z" fill="hsl(90,100%,50%)"/><path d="M1008.4,599.2 L996.9,626.3 L958.4,603.0 L965.0,587.5Z" fill="hsl(105,100%,50%)"/><path d="M997.9,624.5 L979.7,647.7 L948.6,615.3 L959.0,602.0Z" fill="hsl(120,100%,50%)"/><path d="M981.2,646.2 L957.7,664.0 L936.0,624.6 L949.4,614.4Z" fill="hsl(135,100%,50%)"/><path d="M959.5,662.9 L932.1,673.9 L921.4,630.3 L937.0,624.0Z" fill="hsl(150,100%,50%)"/><path d="M934.2,673.4 L904.9,677.0 L905.8,632.0 L922.5,630.0Z" fill="hsl(165,100%,50%)"/><path d="M907.0,677.0 L877.8,672.9 L890.3,629.6 L907.0,632.0Z" fill="hsl(180,100%,50%)"/><path d="M879.8,673.4 L852.7,661.9 L876.0,623.4 L891.5,630.0Z" fill="hsl(195,100%,50%)"/><path d="M854.5,662.9 L831.3,644.7 L863.7,613.6 L877.0,624.0Z" fill="hsl(210,100%,50%)"/><path d="M832.8,646.2 L815.0,622.7 L854.4,601.0 L864.6,614.4Z" fill="hsl(225,100%,50%)"/><path d="M816.1,624.5 L805.1,597.1 L848.7,586.4 L855.0,602.0Z" fill="hsl(240,100%,50%)"/><path d="M805.6,599.2 L802.0,569.9 L847.0,570.8 L849.0,587.5Z" fill="hsl(255,100%,50%)"/><path d="M802.0,572.0 L806.1,542.8 L849.4,555.3 L847.0,572.0Z" fill="hsl(270,100%,50%)"/><path d="M805.6,544.8 L817.1,517.7 L855.6,541.0 L849.0,556.5Z" fill="hsl(285,100%,50%)"/><path d="M816.1,519.5 L834.3,496.3 L865.4,528.7 L855.0,542.0Z" fill="hsl(300,100%,50%)"/><path d="M832.8,497.8 L856.3,480.0 L878.0,519.4 L864.6,529.6Z" fill="hsl(315,100%,50%)"/><path d="M854.5,481.1 L881.9,470.1 L892.6,513.7 L877.0,520.0Z" fill="hsl(330,100%,50%)"/><path d="M879.8,470.6 L909.1,467.0 L908.2,512.0 L891.5,514.0Z" fill="hsl(345,100%,50%)"/><circle cx="907" cy="572" r="108" fill="none" stroke="#000" stroke-width="9"/><circle cx="907" cy="572" r="58" fill="#fff"/><path d="M991,657 L1053,657 L1022,715 Z" fill="#3a3a3a"/><circle cx="1268" cy="575" r="105" fill="url(#igs)" stroke="#000" stroke-width="9"/><path d="M1163,580 Q1268,640 1373,580 M1268,470 Q1215,575 1268,680" fill="none" stroke="#000" stroke-width="9"/><path d="M1505,430 L1505,720 M1490,445 L1778,445 M1550,430 L1550,720 M1490,490 L1778,490 M1595,430 L1595,720 M1490,535 L1778,535 M1640,430 L1640,720 M1490,580 L1778,580 M1685,430 L1685,720 M1490,625 L1778,625 M1730,430 L1730,720 M1490,670 L1778,670 M1775,430 L1775,720 M1490,715 L1778,715" stroke="#666" stroke-width="6" opacity=".8"/><circle cx="1630" cy="575" r="103" fill="url(#igs)" stroke="#000" stroke-width="9"/><path d="M1527,580 Q1630,640 1733,580 M1630,472 Q1578,575 1630,678" fill="none" stroke="#000" stroke-width="9"/><path d="M1717,657 L1779,657 L1748,715 Z" fill="#3a3a3a"/><ellipse cx="180" cy="1035" rx="115" ry="22" fill="#000" opacity=".18"/><circle cx="180" cy="938" r="103" fill="url(#ibb)" stroke="#000" stroke-width="9"/><path d="M215,1015 Q262,990 270,940" fill="none" stroke="#8fb4ff" stroke-width="10" opacity=".8"/><path d="M266,1020 L328,1020 L297,1078 Z" fill="#3a3a3a"/><path d="M525,850 L670,812 L640,955 Z" fill="url(#ior2)" stroke="#000" stroke-width="9"/><path d="M525,850 Q590,870 640,955 Q595,925 525,850Z" fill="#fff2c0" stroke="#000" stroke-width="9" stroke-width="7"/><path d="M629,1020 L691,1020 L660,1078 Z" fill="#3a3a3a"/><path d="M778,825 L880,825 M778,955 L880,955 M890,965 L890,1068 M1018,965 L1018,1040" stroke="#000" stroke-width="9"/><path d="M805,850 L805,930 M790,850 L820,850 M790,930 L820,930 M915,1040 L995,1040 M918,1022 L918,1058 M990,1022 L990,1058" stroke="#000" stroke-width="8"/><rect x="877.0" y="811.0" width="38" height="38" fill="#fff" stroke="#000" stroke-width="9"/><rect x="877.0" y="929.0" width="38" height="38" fill="#fff" stroke="#000" stroke-width="9"/><rect x="997.0" y="929.0" width="38" height="38" fill="#fff" stroke="#000" stroke-width="9"/><path d="M991,1020 L1053,1020 L1022,1078 Z" fill="#3a3a3a"/></g></svg>
<div class="abs" style="left:320px;top:160px;width:2px;height:1576px;background:#000"></div>
<div class="abs" style="left:322px;top:212px;width:2036px;height:1524px;background:rgb(157,163,171)"></div>
<svg class="abs" style="left:322px;top:212px" width="2036" height="1524" viewBox="322 212 2036 1524">
<defs><linearGradient id="gfil" x1="0" x2="1" y1="0" y2="0"><stop offset="0" stop-color="#e9e9e9"/><stop offset=".45" stop-color="#dcdcdc"/><stop offset="1" stop-color="#8a8a8a"/></linearGradient><linearGradient id="gfil2" x1="0" x2="1" y1="0" y2="0"><stop offset="0" stop-color="#c4c4c4"/><stop offset=".6" stop-color="#e6e6e6"/><stop offset="1" stop-color="#dddddd"/></linearGradient><linearGradient id='gbody' gradientUnits='userSpaceOnUse' x1='1676' y1='1078' x2='1700' y2='1083.3'><stop offset='0' stop-color='#ebebeb'/><stop offset='.45' stop-color='#d6d6d6'/><stop offset='1' stop-color='#8e8e8e'/></linearGradient><linearGradient id="gfil3" x1="0" x2="1" y1="0" y2="0"><stop offset="0" stop-color="#dddddd"/><stop offset=".5" stop-color="#cfcfcf"/><stop offset="1" stop-color="#777"/></linearGradient></defs>
<path d="M1800,640 L1856,645 L1851,689 L1709,1262 L1590,1560 L1577,1568 L1560,1560 L1676,1078 L1719,1004 Z" fill="#555555" />
<path d="M619,725 L692,1229 Q694,1238 702,1240.5 L1567,1564.6 L1676,1078 L1360,971 Z" fill="#dddddd" />
<path d="M1676,1078 L1567,1564.6 Q1577,1569 1590,1560 L1701.5,1080 L1700,1071 Z" fill="url(#gbody)" />
<path d="M609,660 L617,719 Q618,726 624,728 L1676,1077 L1690,1013 L621,668 Z" fill="#dddddd" />
<path d="M1690,1013 L1676,1077 Q1690,1079 1701,1071 L1716,1008 Q1702,1015 1690,1013Z" fill="url(#gfil)" />
<path d="M610,660 Q608,666 621,669 L1690,1013 Q1710,1016 1719,1004 L1851,689 L1800,640 L900,500 L722,518 Z" fill="#cdcdcd" />
<path d="M667,584.3 L1752,925" fill="none" stroke="#000" stroke-width="1.6"/>
<path d="M715,433 L724,522 L732,528 L945,593 L990,538 L975,512 Z" fill="#dddddd" />
<path d="M715,433 L724,522 L732,528 L725,445 Z" fill="url(#gfil2)" />
<path d="M918,628 L920,713 Q922,722 932,723 L1385,866 L1391,776 Z" fill="#dddddd" />
<path d="M918,628 L920,713 Q922,722 932,723 L929,640 Z" fill="url(#gfil2)" />
<path d="M1391,776 L1385,866 Q1398,870 1409,862 L1414,770 Z" fill="url(#gfil3)" />
<path d="M1413,779 L1467,690 L1471,700 L1466,761 L1411,862 Z" fill="#555555" />
<path d="M1464,680 L1466,761 Q1476,756 1487,759.5 L1765,842 Q1772,845 1780,842 L1800,761 L1808,754 L1785,757 L1497,667 Z" fill="#dddddd" />
<path d="M1469,686 L1466,761 Q1476,756 1487,759.5 L1495,679 Z" fill="url(#gfil2)" />
<path d="M1782,757 L1763.5,840.5 Q1772,845 1780,842 L1800,761 L1803,755 Z" fill="url(#gfil)" />
<g fill="none" stroke="#000" stroke-linecap="round" stroke-linejoin="round">
<path d="M1856,646 L1851,666 L1848.6,679 L1851,689 L1709,1262 L1590,1560" stroke-width="2.5"/>
<path d="M1848,700 L1719,1004" stroke-width="3.6"/>
<path d="M1770,1015 L1645,1310" stroke-width="1.7"/>
<path d="M1767,920 L1651,1395" stroke-width="2.0"/>
<path d="M1836,750 L1794.8,850 L1741.5,980 L1711.4,1039.5 L1701.5,1080 L1647.2,1330 L1592,1556" stroke-width="3.6"/>
<path d="M619,725 L692,1229 Q694,1238 702,1240.5" stroke-width="2.2"/>
<path d="M628,733 L702,1239" stroke-width="3.6"/>
<path d="M702,1240.5 L1567,1564.6 Q1578,1569 1590,1560" stroke-width="3.0"/>
<path d="M1676,1078 L1568,1564.6" stroke-width="3.6"/>
<path d="M1689,1079 L1580,1566" stroke-width="1.7"/>
<path d="M659,981 L1122,1143 L1623,1318 Q1640,1321 1647,1313" stroke-width="1.7"/>
<path d="M1127,892 L1117,1395" stroke-width="1.7"/>
<path d="M617,718 Q618,724.500 624,725.800 L1677,1071 Q1690,1074.500 1701,1068" stroke-width="3.0"/>
<path d="M621,729.500 L1675,1078.500 Q1688,1082 1700,1075" stroke-width="3.6"/>
<path d="M609,660 L617,719" stroke-width="3.2"/>
<path d="M622,670 L628,728" stroke-width="2.5"/>
<path d="M722,518 L611,656 Q607,665 621,669 L1690,1013 Q1710,1016 1719,1004" stroke-width="3.6"/>
<path d="M1690,1014 L1676,1077" stroke-width="3.6"/>
<path d="M1707,1014 L1695,1073" stroke-width="1.7"/>
<path d="M1129,832 L1127,892" stroke-width="1.7"/>
<path d="M1152,794 L1129,832" stroke-width="1.7"/>
<path d="M717,439 L724,522" stroke-width="2.5"/>
<path d="M725,447 L732,527" stroke-width="2.5"/>
<path d="M725,488.5 L970,554.6" stroke-width="1.7"/>
<path d="M732,528 L945,593" stroke-width="1.7"/>
<path d="M847,483.5 L851,565" stroke-width="1.7"/>
<path d="M970,520 L972,560" stroke-width="1.7"/>
<path d="M920,631 L920,713 Q922,722 932,723" stroke-width="2.5"/>
<path d="M929,641 L933,723" stroke-width="2.5"/>
<path d="M930,680 L1389,820" stroke-width="1.7"/>
<path d="M932,723 L1385,866 Q1398,870 1409,862" stroke-width="1.7"/>
<path d="M1155,707 L1152,794" stroke-width="1.7"/>
<path d="M1390,778 L1385,866" stroke-width="2.5"/>
<path d="M1413,779 L1409,862" stroke-width="2.5"/>
<path d="M1467,690 L1471,700 L1466,761 L1411,862" stroke-width="2.5"/>
<path d="M1444,727 L1441,777" stroke-width="1.7"/>
<path d="M1495,679 L1487.7,758.4" stroke-width="2.5"/>
<path d="M1479,682 L1476.6,757" stroke-width="1.7"/>
<path d="M1419.5,823 L1469,721" stroke-width="1.7"/>
<path d="M1466,761 Q1476,756 1487,759.5 L1765,842 Q1772,845 1780,842" stroke-width="1.7"/>
<path d="M1471.6,722 Q1480,715 1495,717.5 L1772,799 Q1786,802 1792,795" stroke-width="1.7"/>
<path d="M1638,718 L1623,798" stroke-width="1.7"/>
<path d="M1782,762 L1763.5,840.5" stroke-width="2.5"/>
<path d="M1800,761 L1780,842" stroke-width="2.5"/>
</g>
<g transform="translate(772,608) rotate(-5)"><ellipse cx="0" cy="4" rx="95.0" ry="67.0" fill="#d2d2d2" stroke="#000" stroke-width="1.7"/><ellipse cx="0" cy="0" rx="95.0" ry="67.0" fill="#d6d6d6" stroke="#000" stroke-width="3.6"/><ellipse cx="0" cy="-0.5" rx="85.5" ry="60.3" fill="#c2c2c2" stroke="#000" stroke-width="4.0"/><ellipse cx="0" cy="0.5" rx="81.2" ry="57.3" fill="#b8b8b8" stroke="#000" stroke-width="1.7"/><polygon points="78.4,-4.3 65.7,8.8 72.0,24.1 51.7,31.0 46.3,46.5 23.8,45.3 8.2,56.8 -10.4,47.8 -32.1,52.3 -41.8,37.9 -63.8,34.2 -62.1,18.3 -78.4,7.3 -65.7,-5.8 -72.0,-21.1 -51.7,-28.0 -46.3,-43.5 -23.8,-42.3 -8.2,-53.8 10.4,-44.8 32.1,-49.3 41.8,-34.9 63.8,-31.2 62.1,-15.3" fill="#e2e2e2" stroke="#000" stroke-width="2.5" stroke-linejoin="miter"/><polygon points="77.5,-9.2 63.8,3.6 71.2,18.8 50.2,25.2 45.8,40.9 23.2,39.0 8.1,51.1 -10.1,41.5 -31.7,46.7 -40.7,31.9 -63.0,28.8 -60.3,12.8 -77.5,2.2 -63.8,-10.6 -71.2,-25.8 -50.2,-32.2 -45.8,-47.9 -23.2,-46.0 -8.1,-58.1 10.1,-48.5 31.7,-53.7 40.7,-38.9 63.0,-35.8 60.3,-19.8" fill="#cdcdcd" stroke="#000" stroke-width="3.9" stroke-linejoin="miter"/><line x1="14.6" y1="21.9" x2="23.2" y2="38.5" stroke="#000" stroke-width="1.7"/><line x1="-25.7" y1="17.4" x2="-40.7" y2="31.4" stroke="#000" stroke-width="1.7"/><line x1="-40.3" y1="-9.5" x2="-63.8" y2="-11.1" stroke="#000" stroke-width="1.7"/><line x1="-14.6" y1="-31.9" x2="-23.2" y2="-46.5" stroke="#000" stroke-width="1.7"/><line x1="25.7" y1="-27.4" x2="40.7" y2="-39.4" stroke="#000" stroke-width="1.7"/><line x1="40.3" y1="-0.5" x2="63.8" y2="3.1" stroke="#000" stroke-width="1.7"/><ellipse cx="0" cy="-5" rx="40.9" ry="28.8" fill="#cdcdcd" stroke="#000" stroke-width="3.8000000000000003"/><line x1="10.3" y1="-1.6" x2="37.0" y2="7.2" stroke="#000" stroke-width="1.7"/><line x1="-4.8" y1="2.3" x2="-17.3" y2="21.1" stroke="#000" stroke-width="1.7"/><line x1="-10.3" y1="-8.4" x2="-37.0" y2="-17.2" stroke="#000" stroke-width="1.7"/><line x1="4.8" y1="-12.3" x2="17.3" y2="-31.1" stroke="#000" stroke-width="1.7"/><ellipse cx="0" cy="-6" rx="10.0" ry="7.0" fill="#dedede" stroke="#000" stroke-width="3.6"/></g>
<g transform="translate(1635.2,874) rotate(3)"><ellipse cx="0" cy="4" rx="104.0" ry="77.0" fill="#d2d2d2" stroke="#000" stroke-width="1.7"/><ellipse cx="0" cy="0" rx="104.0" ry="77.0" fill="#d6d6d6" stroke="#000" stroke-width="3.6"/><ellipse cx="0" cy="-0.5" rx="93.6" ry="69.3" fill="#c2c2c2" stroke="#000" stroke-width="4.0"/><ellipse cx="0" cy="0.5" rx="88.9" ry="65.8" fill="#b8b8b8" stroke="#000" stroke-width="1.7"/><polygon points="85.8,-5.2 71.9,9.9 78.9,27.5 56.6,35.4 50.7,53.2 26.1,51.8 9.0,65.1 -11.4,54.7 -35.1,59.9 -45.8,43.4 -69.8,39.1 -68.0,20.8 -85.8,8.2 -71.9,-6.9 -78.9,-24.5 -56.6,-32.4 -50.7,-50.2 -26.1,-48.8 -9.0,-62.1 11.4,-51.7 35.1,-56.9 45.8,-40.4 69.8,-36.1 68.0,-17.8" fill="#e2e2e2" stroke="#000" stroke-width="2.5" stroke-linejoin="miter"/><polygon points="84.8,-10.1 69.8,4.7 77.9,22.2 55.0,29.5 50.1,47.6 25.3,45.4 8.9,59.3 -11.1,48.2 -34.7,54.2 -44.5,37.2 -69.0,33.6 -66.0,15.3 -84.8,3.1 -69.8,-11.7 -77.9,-29.2 -55.0,-36.5 -50.1,-54.6 -25.3,-52.4 -8.9,-66.3 11.1,-55.2 34.7,-61.2 44.5,-44.2 69.0,-40.6 66.0,-22.3" fill="#cdcdcd" stroke="#000" stroke-width="3.9" stroke-linejoin="miter"/><line x1="16.0" y1="25.9" x2="25.3" y2="44.9" stroke="#000" stroke-width="1.7"/><line x1="-28.1" y1="20.7" x2="-44.5" y2="36.7" stroke="#000" stroke-width="1.7"/><line x1="-44.2" y1="-10.2" x2="-69.8" y2="-12.2" stroke="#000" stroke-width="1.7"/><line x1="-16.0" y1="-35.9" x2="-25.3" y2="-52.9" stroke="#000" stroke-width="1.7"/><line x1="28.1" y1="-30.7" x2="44.5" y2="-44.7" stroke="#000" stroke-width="1.7"/><line x1="44.2" y1="0.2" x2="69.8" y2="4.2" stroke="#000" stroke-width="1.7"/><ellipse cx="0" cy="-5" rx="44.7" ry="33.1" fill="#cdcdcd" stroke="#000" stroke-width="3.8000000000000003"/><line x1="11.3" y1="-1.1" x2="40.5" y2="9.0" stroke="#000" stroke-width="1.7"/><line x1="-5.3" y1="3.4" x2="-18.9" y2="25.0" stroke="#000" stroke-width="1.7"/><line x1="-11.3" y1="-8.9" x2="-40.5" y2="-19.0" stroke="#000" stroke-width="1.7"/><line x1="5.3" y1="-13.4" x2="18.9" y2="-35.0" stroke="#000" stroke-width="1.7"/><ellipse cx="0" cy="-6" rx="10.9" ry="8.1" fill="#dedede" stroke="#000" stroke-width="3.6"/></g>
<g stroke="#000" fill="#cdcdcd"><ellipse cx="899" cy="652" rx="22.5" ry="19" stroke-width="2"/><ellipse cx="899" cy="649" rx="22.5" ry="19" stroke-width="2"/><ellipse cx="899" cy="644.500" rx="22.500" ry="19" stroke-width="3"/><path d="M886,637 L913,650 M909,633 L889,660" stroke-width="6" fill="none"/><path d="M888,638 L911,649 M907.500,635 L890.500,658" stroke="#cdcdcd" stroke-width="1.2" fill="none"/><ellipse cx="1482.5" cy="833" rx="31" ry="22" stroke-width="2"/><ellipse cx="1482.5" cy="830" rx="31" ry="22" stroke-width="2"/><ellipse cx="1482.5" cy="825" rx="31" ry="22" stroke-width="3"/><path d="M1466,815 L1502,827 L1500,834 L1464,822 Z" stroke-width="2.600" fill="#b5b5b5"/><path d="M1497,806 L1468,846" stroke-width="1.3"/></g>
<path d="M718.8,444.7 Q714.9,443.6 714.4,439.6 L714.1,436.6 Q713.5,431.6 716.7,427.7 L784.4,346.7 Q797.8,330.5 818.0,336.3 L1847.6,628.3 Q1862.1,632.4 1856.0,646.1 L1809.0,751.7 Q1802.9,765.4 1788.5,761.2 L1492.8,674.7 Q1477.5,670.2 1469.4,684.0 L1417.6,773.2 Q1409.6,787.0 1394.3,782.3 L916.5,635.2 Q907.0,632.2 913.1,624.4 L979.8,539.4 Q991.6,524.4 973.3,519.1 Z" fill="#dadada" />
<path d="M724.4,438.6 Q720.6,437.4 723.1,434.4 L792.4,351.4 Q801.4,340.6 814.9,344.4 L1840.6,635.3 Q1848.3,637.5 1845.0,644.8 L1799.7,746.7 Q1796.5,754.0 1788.8,751.8 L1498.3,666.8 Q1475.3,660.1 1463.2,680.8 L1410.8,771.0 Q1406.8,777.9 1399.2,775.5 L926.2,629.9 Q922.4,628.7 924.9,625.6 L990.2,542.3 Q1006.9,521.1 981.0,513.5 Z" fill="#d4d4d4" />
<path d="M727.9,439.6 Q724.0,438.5 726.6,435.4 L795.1,353.4 Q800.8,346.5 809.5,348.9 L1838.2,640.7 Q1845.9,642.9 1842.6,650.2 L1799.7,746.7 Q1796.5,754.0 1788.8,751.8 L1498.3,666.8 Q1475.3,660.1 1463.2,680.8 L1410.8,771.0 Q1406.8,777.9 1399.2,775.5 L929.8,631.0 Q926.0,629.8 928.5,626.7 L995.7,541.0 Q1010.5,522.2 987.5,515.4 Z" fill="#cdcdcd" />
<g fill="none" stroke="#000" stroke-linecap="round" stroke-linejoin="round">
<path d="M1300.5,477 L1231,596 L1165,702" stroke-width="1.7"/>
<path d="M1003,531 L1231,596 L1471,667" stroke-width="1.7"/>
<path d="M718.8,444.7 Q714.9,443.6 714.4,439.6 L714.1,436.6 Q713.5,431.6 716.7,427.7 L784.4,346.7 Q797.8,330.5 818.0,336.3 L1847.6,628.3 Q1862.1,632.4 1856.0,646.1 L1809.0,751.7 Q1802.9,765.4 1788.5,761.2 L1492.8,674.7 Q1477.5,670.2 1469.4,684.0 L1417.6,773.2 Q1409.6,787.0 1394.3,782.3 L916.5,635.2 Q907.0,632.2 913.1,624.4 L979.8,539.4 Q991.6,524.4 973.3,519.1 Z" stroke-width="3.6"/>
<path d="M724.4,438.6 Q720.6,437.4 723.1,434.4 L792.4,351.4 Q801.4,340.6 814.9,344.4 L1840.6,635.3 Q1848.3,637.5 1845.0,644.8 L1799.7,746.7 Q1796.5,754.0 1788.8,751.8 L1498.3,666.8 Q1475.3,660.1 1463.2,680.8 L1410.8,771.0 Q1406.8,777.9 1399.2,775.5 L926.2,629.9 Q922.4,628.7 924.9,625.6 L990.2,542.3 Q1006.9,521.1 981.0,513.5 Z" stroke-width="3.6"/>
<path d="M727.9,439.6 Q724.0,438.5 726.6,435.4 L795.1,353.4 Q800.8,346.5 809.5,348.9 L1838.2,640.7 Q1845.9,642.9 1842.6,650.2 L1799.7,746.7 Q1796.5,754.0 1788.8,751.8 L1498.3,666.8 Q1475.3,660.1 1463.2,680.8 L1410.8,771.0 Q1406.8,777.9 1399.2,775.5 L929.8,631.0 Q926.0,629.8 928.5,626.7 L995.7,541.0 Q1010.5,522.2 987.5,515.4 Z" stroke-width="2.5"/>
</g>
</svg>
<div class="abs" style="left:324px;top:214px;width:152px;height:38px;background:#2e5c8c"></div>
<span id="t_52" class="t" style="left:333.0px;top:218.8px;font-size:25px;font-weight:700;color:#fff;letter-spacing:-0.670px;">Perspective</span>
<svg class="abs" style="left:360px;top:1600px" width="130" height="80" viewBox="360 1600 130 80"><g stroke="#5f646b" stroke-width="1.5" fill="none"><path d="M394,1663 L370,1625 M394,1663 L399,1628 M394,1663 L449,1645"/></g></svg>
<span id="t_53" class="t" style="left:378.0px;top:1608.2px;font-size:20px;font-weight:400;color:#555b63;letter-spacing:0.000px;">y</span>
<span id="t_54" class="t" style="left:403.0px;top:1609.2px;font-size:20px;font-weight:400;color:#555b63;letter-spacing:0.000px;">z</span>
<span id="t_55" class="t" style="left:456.0px;top:1631.0px;font-size:22px;font-weight:400;color:#555b63;letter-spacing:0.000px;">x</span>
<div class="abs" style="left:2358px;top:160px;width:2px;height:1576px;background:#000"></div>
<div class="abs" style="left:2360px;top:212px;width:520px;height:736px;background:#ececec"></div>
<div class="abs" style="left:2360px;top:210px;width:520px;height:2px;background:#c6c6c6"></div>
<span id="t_56" class="t" style="left:2506.3px;top:554.3px;font-size:41px;font-weight:400;color:#a9a9a9;letter-spacing:-0.456px;">No Selection</span>
<div class="abs" style="left:2376px;top:899px;width:33px;height:33px;border-radius:50%;background:#fff;box-shadow:0 1px 2.5px rgba(0,0,0,.4)"></div>
<span id="t_57" class="t" style="left:2385.5px;top:901.9px;font-size:23px;font-weight:400;color:#2a7ef0;letter-spacing:0.000px;">?</span>
<div class="abs" style="left:2360px;top:946px;width:520px;height:3px;background:#a8a8a8"></div>
<div class="abs" style="left:2360px;top:949px;width:520px;height:52px;background:linear-gradient(#f8f8f8,#ececec)"></div>
<div class="abs" style="left:2360px;top:1001px;width:520px;height:1.5px;background:#c6c6c6"></div>
<div class="abs" style="left:2360px;top:1002.5px;width:520px;height:638px;background:#fff"></div>
<div class="abs" style="left:2360px;top:1002.5px;width:520px;height:30px;background:#fafafa"></div>
<div class="abs" style="left:2360px;top:1032px;width:520px;height:1.5px;background:#d4d4d4"></div>
<span id="t_58" class="t" style="left:2369.2px;top:1001.5px;font-size:24.5px;font-weight:400;color:#1f1f1f;letter-spacing:-1.440px;">Name</span>
<span id="t_59" class="t" style="left:2768.2px;top:1001.5px;font-size:24.5px;font-weight:400;color:#1f1f1f;letter-spacing:0.000px;letter-spacing:-0.2px;">Material Li</span>
<div class="abs" style="left:2513px;top:1005px;width:1.5px;height:23px;background:#d9d9d9"></div>
<div class="abs" style="left:2559px;top:1005px;width:1.5px;height:23px;background:#d9d9d9"></div>
<div class="abs" style="left:2605px;top:1005px;width:1.5px;height:23px;background:#d9d9d9"></div>
<div class="abs" style="left:2650.7px;top:1005px;width:1.5px;height:23px;background:#d9d9d9"></div>
<div class="abs" style="left:2710.9px;top:1005px;width:1.5px;height:23px;background:#d9d9d9"></div>
<div class="abs" style="left:2758.6px;top:1005px;width:1.5px;height:23px;background:#d9d9d9"></div>
<span id="t_60" class="t" style="left:2398.4px;top:1035.0px;font-size:24.5px;font-weight:400;color:#1f1f1f;letter-spacing:-0.720px;">Default</span>
<div class="abs" style="left:2521.5px;top:1036px;width:28px;height:28px;border-radius:50%;background:linear-gradient(#4ba0fa,#1a7bf3)"></div>
<div class="abs" style="left:2531px;top:1045.5px;width:9px;height:9px;border-radius:50%;background:#fff"></div>
<div class="abs" style="left:2667px;top:1036px;width:28px;height:28px;background:#000000;border:2px solid #000;box-sizing:border-box"></div>
<svg class="abs" style="left:2567.6px;top:1034px;opacity:0.45" width="28" height="32" viewBox="-14 -16 28 32"><defs><radialGradient id="bg1050" cx=".4" cy=".3" r=".75"><stop offset="0" stop-color="#fff3a8"/><stop offset=".5" stop-color="#fdb52c"/><stop offset="1" stop-color="#f08300"/></radialGradient></defs><path d="M0,-14 Q12,-14 12,-3 Q12,3 5.5,8 L5,11 L-5,11 L-5.5,8 Q-12,3 -12,-3 Q-12,-14 0,-14Z" fill="url(#bg1050)" stroke="#e08a10" stroke-width=".8"/><path d="M-4.5,9 L4.5,9 L4,14 Q0,16.5 -4,14 Z" fill="#cfcfcf" stroke="#8a8a8a" stroke-width=".8"/><path d="M-3,-4 L-1,3 L1,3 L3,-4" fill="none" stroke="#fff3c0" stroke-width="1.2" opacity=".9"/></svg>
<svg class="abs" style="left:2610.6px;top:1034px;opacity:0.45" width="32" height="32" viewBox="-16 -16 32 32"><path d="M1,-2 L1,-7 Q1,-13 7,-13 Q13,-13 13,-7 L13,-3" fill="none" stroke="#b4b4b4" stroke-width="3.2"/><rect x="-13" y="-2" width="19" height="16" rx="2" fill="#d9822b" stroke="#9a5412" stroke-width="1"/><path d="M-13,2 L6,2 M-13,6 L6,6 M-13,10 L6,10" stroke="#f4b36a" stroke-width="1.6"/></svg>
<span id="t_61" class="t" style="left:2398.4px;top:1069.3px;font-size:24.5px;font-weight:400;color:#1f1f1f;letter-spacing:-0.820px;">Layer 01</span>
<div class="abs" style="left:2522px;top:1070.8px;width:27px;height:27px;border-radius:50%;background:#fff;box-shadow:0 0 0 1px #c3c3c3, 0 1px 1px rgba(0,0,0,.15)"></div>
<div class="abs" style="left:2667px;top:1070.3px;width:28px;height:28px;background:#fb2a1c;border:2px solid #000;box-sizing:border-box"></div>
<svg class="abs" style="left:2567.6px;top:1068.3px;opacity:1" width="28" height="32" viewBox="-14 -16 28 32"><defs><radialGradient id="bg1084" cx=".4" cy=".3" r=".75"><stop offset="0" stop-color="#fff3a8"/><stop offset=".5" stop-color="#fdb52c"/><stop offset="1" stop-color="#f08300"/></radialGradient></defs><path d="M0,-14 Q12,-14 12,-3 Q12,3 5.5,8 L5,11 L-5,11 L-5.5,8 Q-12,3 -12,-3 Q-12,-14 0,-14Z" fill="url(#bg1084)" stroke="#e08a10" stroke-width=".8"/><path d="M-4.5,9 L4.5,9 L4,14 Q0,16.5 -4,14 Z" fill="#cfcfcf" stroke="#8a8a8a" stroke-width=".8"/><path d="M-3,-4 L-1,3 L1,3 L3,-4" fill="none" stroke="#fff3c0" stroke-width="1.2" opacity=".9"/></svg>
<svg class="abs" style="left:2610.6px;top:1068.3px;opacity:1" width="32" height="32" viewBox="-16 -16 32 32"><path d="M1,-2 L1,-7 Q1,-13 7,-13 Q13,-13 13,-7 L13,-3" fill="none" stroke="#b4b4b4" stroke-width="3.2"/><rect x="-13" y="-2" width="19" height="16" rx="2" fill="#d9822b" stroke="#9a5412" stroke-width="1"/><path d="M-13,2 L6,2 M-13,6 L6,6 M-13,10 L6,10" stroke="#f4b36a" stroke-width="1.6"/></svg>
<span id="t_62" class="t" style="left:2398.4px;top:1103.0px;font-size:24.5px;font-weight:400;color:#1f1f1f;letter-spacing:-0.820px;">Layer 02</span>
<div class="abs" style="left:2522px;top:1104.5px;width:27px;height:27px;border-radius:50%;background:#fff;box-shadow:0 0 0 1px #c3c3c3, 0 1px 1px rgba(0,0,0,.15)"></div>
<div class="abs" style="left:2667px;top:1104px;width:28px;height:28px;background:#8c4fd0;border:2px solid #000;box-sizing:border-box"></div>
<svg class="abs" style="left:2567.6px;top:1102px;opacity:1" width="28" height="32" viewBox="-14 -16 28 32"><defs><radialGradient id="bg1118" cx=".4" cy=".3" r=".75"><stop offset="0" stop-color="#fff3a8"/><stop offset=".5" stop-color="#fdb52c"/><stop offset="1" stop-color="#f08300"/></radialGradient></defs><path d="M0,-14 Q12,-14 12,-3 Q12,3 5.5,8 L5,11 L-5,11 L-5.5,8 Q-12,3 -12,-3 Q-12,-14 0,-14Z" fill="url(#bg1118)" stroke="#e08a10" stroke-width=".8"/><path d="M-4.5,9 L4.5,9 L4,14 Q0,16.5 -4,14 Z" fill="#cfcfcf" stroke="#8a8a8a" stroke-width=".8"/><path d="M-3,-4 L-1,3 L1,3 L3,-4" fill="none" stroke="#fff3c0" stroke-width="1.2" opacity=".9"/></svg>
<svg class="abs" style="left:2610.6px;top:1102px;opacity:1" width="32" height="32" viewBox="-16 -16 32 32"><path d="M1,-2 L1,-7 Q1,-13 7,-13 Q13,-13 13,-7 L13,-3" fill="none" stroke="#b4b4b4" stroke-width="3.2"/><rect x="-13" y="-2" width="19" height="16" rx="2" fill="#d9822b" stroke="#9a5412" stroke-width="1"/><path d="M-13,2 L6,2 M-13,6 L6,6 M-13,10 L6,10" stroke="#f4b36a" stroke-width="1.6"/></svg>
<span id="t_63" class="t" style="left:2398.4px;top:1136.7px;font-size:24.5px;font-weight:400;color:#1f1f1f;letter-spacing:-0.820px;">Layer 03</span>
<div class="abs" style="left:2522px;top:1138.2px;width:27px;height:27px;border-radius:50%;background:#fff;box-shadow:0 0 0 1px #c3c3c3, 0 1px 1px rgba(0,0,0,.15)"></div>
<div class="abs" style="left:2667px;top:1137.7px;width:28px;height:28px;background:#0b3cf5;border:2px solid #000;box-sizing:border-box"></div>
<svg class="abs" style="left:2567.6px;top:1135.7px;opacity:1" width="28" height="32" viewBox="-14 -16 28 32"><defs><radialGradient id="bg1151" cx=".4" cy=".3" r=".75"><stop offset="0" stop-color="#fff3a8"/><stop offset=".5" stop-color="#fdb52c"/><stop offset="1" stop-color="#f08300"/></radialGradient></defs><path d="M0,-14 Q12,-14 12,-3 Q12,3 5.5,8 L5,11 L-5,11 L-5.5,8 Q-12,3 -12,-3 Q-12,-14 0,-14Z" fill="url(#bg1151)" stroke="#e08a10" stroke-width=".8"/><path d="M-4.5,9 L4.5,9 L4,14 Q0,16.5 -4,14 Z" fill="#cfcfcf" stroke="#8a8a8a" stroke-width=".8"/><path d="M-3,-4 L-1,3 L1,3 L3,-4" fill="none" stroke="#fff3c0" stroke-width="1.2" opacity=".9"/></svg>
<svg class="abs" style="left:2610.6px;top:1135.7px;opacity:1" width="32" height="32" viewBox="-16 -16 32 32"><path d="M1,-2 L1,-7 Q1,-13 7,-13 Q13,-13 13,-7 L13,-3" fill="none" stroke="#b4b4b4" stroke-width="3.2"/><rect x="-13" y="-2" width="19" height="16" rx="2" fill="#d9822b" stroke="#9a5412" stroke-width="1"/><path d="M-13,2 L6,2 M-13,6 L6,6 M-13,10 L6,10" stroke="#f4b36a" stroke-width="1.6"/></svg>
<span id="t_64" class="t" style="left:2398.4px;top:1171.0px;font-size:24.5px;font-weight:400;color:#1f1f1f;letter-spacing:-0.820px;">Layer 04</span>
<div class="abs" style="left:2522px;top:1172.5px;width:27px;height:27px;border-radius:50%;background:#fff;box-shadow:0 0 0 1px #c3c3c3, 0 1px 1px rgba(0,0,0,.15)"></div>
<div class="abs" style="left:2667px;top:1172px;width:28px;height:28px;background:#02801a;border:2px solid #000;box-sizing:border-box"></div>
<svg class="abs" style="left:2567.6px;top:1170px;opacity:1" width="28" height="32" viewBox="-14 -16 28 32"><defs><radialGradient id="bg1186" cx=".4" cy=".3" r=".75"><stop offset="0" stop-color="#fff3a8"/><stop offset=".5" stop-color="#fdb52c"/><stop offset="1" stop-color="#f08300"/></radialGradient></defs><path d="M0,-14 Q12,-14 12,-3 Q12,3 5.5,8 L5,11 L-5,11 L-5.5,8 Q-12,3 -12,-3 Q-12,-14 0,-14Z" fill="url(#bg1186)" stroke="#e08a10" stroke-width=".8"/><path d="M-4.5,9 L4.5,9 L4,14 Q0,16.5 -4,14 Z" fill="#cfcfcf" stroke="#8a8a8a" stroke-width=".8"/><path d="M-3,-4 L-1,3 L1,3 L3,-4" fill="none" stroke="#fff3c0" stroke-width="1.2" opacity=".9"/></svg>
<svg class="abs" style="left:2610.6px;top:1170px;opacity:1" width="32" height="32" viewBox="-16 -16 32 32"><path d="M1,-2 L1,-7 Q1,-13 7,-13 Q13,-13 13,-7 L13,-3" fill="none" stroke="#b4b4b4" stroke-width="3.2"/><rect x="-13" y="-2" width="19" height="16" rx="2" fill="#d9822b" stroke="#9a5412" stroke-width="1"/><path d="M-13,2 L6,2 M-13,6 L6,6 M-13,10 L6,10" stroke="#f4b36a" stroke-width="1.6"/></svg>
<span id="t_65" class="t" style="left:2398.4px;top:1204.7px;font-size:24.5px;font-weight:400;color:#1f1f1f;letter-spacing:-0.820px;">Layer 05</span>
<div class="abs" style="left:2522px;top:1206.2px;width:27px;height:27px;border-radius:50%;background:#fff;box-shadow:0 0 0 1px #c3c3c3, 0 1px 1px rgba(0,0,0,.15)"></div>
<div class="abs" style="left:2667px;top:1205.7px;width:28px;height:28px;background:#ffffff;border:2px solid #000;box-sizing:border-box"></div>
<svg class="abs" style="left:2567.6px;top:1203.7px;opacity:1" width="28" height="32" viewBox="-14 -16 28 32"><defs><radialGradient id="bg1219" cx=".4" cy=".3" r=".75"><stop offset="0" stop-color="#fff3a8"/><stop offset=".5" stop-color="#fdb52c"/><stop offset="1" stop-color="#f08300"/></radialGradient></defs><path d="M0,-14 Q12,-14 12,-3 Q12,3 5.5,8 L5,11 L-5,11 L-5.5,8 Q-12,3 -12,-3 Q-12,-14 0,-14Z" fill="url(#bg1219)" stroke="#e08a10" stroke-width=".8"/><path d="M-4.5,9 L4.5,9 L4,14 Q0,16.5 -4,14 Z" fill="#cfcfcf" stroke="#8a8a8a" stroke-width=".8"/><path d="M-3,-4 L-1,3 L1,3 L3,-4" fill="none" stroke="#fff3c0" stroke-width="1.2" opacity=".9"/></svg>
<svg class="abs" style="left:2610.6px;top:1203.7px;opacity:1" width="32" height="32" viewBox="-16 -16 32 32"><path d="M1,-2 L1,-7 Q1,-13 7,-13 Q13,-13 13,-7 L13,-3" fill="none" stroke="#b4b4b4" stroke-width="3.2"/><rect x="-13" y="-2" width="19" height="16" rx="2" fill="#d9822b" stroke="#9a5412" stroke-width="1"/><path d="M-13,2 L6,2 M-13,6 L6,6 M-13,10 L6,10" stroke="#f4b36a" stroke-width="1.6"/></svg>
<div class="abs" style="left:2360px;top:1640px;width:520px;height:1.5px;background:#dcdcdc"></div>
<div class="abs" style="left:2360px;top:1641.5px;width:520px;height:28px;background:#fafafa"></div>
<div class="abs" style="left:2366.5px;top:1648px;width:339px;height:15.5px;background:#c1c1c1;border-radius:8px"></div>
<div class="abs" style="left:2360px;top:1669.5px;width:520px;height:1.5px;background:#d0d0d0"></div>
<div class="abs" style="left:2360px;top:1671px;width:520px;height:65px;background:#ececec"></div>
<div class="abs" style="left:2396px;top:1683.5px;width:88px;height:36px;background:#fdfdfd;border-radius:7px;box-shadow:0 1px 1.5px rgba(0,0,0,.3)"></div>
<div class="abs" style="left:2441px;top:1684px;width:1.5px;height:35px;background:#e2e2e2"></div>
<div class="abs" style="left:2516px;top:1683.5px;width:72px;height:36px;background:#fdfdfd;border-radius:7px;box-shadow:0 1px 1.5px rgba(0,0,0,.3)"></div>
<svg class="abs" style="left:2396px;top:1683px" width="200" height="38" viewBox="0 0 200 38"><g stroke="#4a4a4a" stroke-width="1.8" fill="none"><path d="M12,18.5 H34 M23,7.5 V29.5"/><path d="M57,18.5 H78" stroke="#c8c8c8"/><path d="M168,15 L174.5,21.5 L181,15" stroke-width="2"/></g><g transform="translate(143,18.5)" fill="#3c3c3c"><circle r="6.3"/><g><rect x="-2.2" y="-9.5" width="4.4" height="5" transform="rotate(0)"/><rect x="-2.2" y="-9.5" width="4.4" height="5" transform="rotate(45)"/><rect x="-2.2" y="-9.5" width="4.4" height="5" transform="rotate(90)"/><rect x="-2.2" y="-9.5" width="4.4" height="5" transform="rotate(135)"/><rect x="-2.2" y="-9.5" width="4.4" height="5" transform="rotate(180)"/><rect x="-2.2" y="-9.5" width="4.4" height="5" transform="rotate(225)"/><rect x="-2.2" y="-9.5" width="4.4" height="5" transform="rotate(270)"/><rect x="-2.2" y="-9.5" width="4.4" height="5" transform="rotate(315)"/></g><circle r="2.6" fill="#fdfdfd"/></g></svg>
<svg class="abs" style="left:2360px;top:162.2px" width="520" height="52" viewBox="2360 -26 520 52"><g fill="none" stroke="#4c4c4c" stroke-width="2" stroke-linejoin="round"><g stroke="#4c4c4c" stroke-width="2.2"><path d="M2404,-15 L2422,-5 L2404,5 L2386,-5 Z" fill="#f4f4f4"/><path d="M2391.5,-0.5 L2386,3 L2404,13.5 L2422,3 L2416.5,-0.5"/></g><g stroke="#1a7bf0" stroke-width="2.2"><circle cx="2452.4" cy="0" r="17"/><circle cx="2452.4" cy="0" r="9.5"/></g><path d="M2491,-14 L2503,-14 L2511,-6 L2511,12 L2491,12 Z M2503,-14 L2503,-6 L2511,-6"/><path d="M2533,-8 L2550,-15 L2562,-9 L2562,8 L2546,16 L2533,8 Z M2533,-8 L2546,-2 L2562,-9 M2546,-2 L2546,16"/><path d="M2579,-8 Q2579,-10 2581,-10 L2587,-10 L2590,-14 L2603,-14 L2606,-10 L2612,-10 Q2614,-10 2614,-8 L2614,11 Q2614,13 2612,13 L2581,13 Q2579,13 2579,11 Z"/><circle cx="2596.5" cy="2" r="9"/><circle cx="2596.5" cy="2" r="5.2"/><g stroke="#8a8a8a" stroke-width="1.2"><path d="M2641,-12 L2662,-6 L2648,10 L2627,3 Z M2636,-7 L2657,-1 M2632,-2 L2653,4.5 M2648,-10 L2634,5 M2655,-8 L2641,7.5"/></g><path d="M2650,-7 L2646.5,-1.5 L2654,0.5" stroke="#222" stroke-width="2.2"/><path d="M2686,-13 L2708,-13 Q2711,-12 2709,-9 L2704,-9 L2700,12 Q2699,15 2695,15 L2678,15 Q2675,13 2678,10 L2683,10 L2686,-13 M2683,10 L2694,10 Q2697,12 2695,15 M2704,-9 Q2702,-12 2705,-13"/><rect x="2723.5" y="-14" width="32" height="27"/><path d="M2724,-13 L2730,-13" stroke-width="3"/><rect x="2772" y="-14" width="33" height="24" rx="2"/><rect x="2775.5" y="-10.5" width="26" height="17" stroke-width="1.5"/><path d="M2785,10 L2783,15 M2792,10 L2794,15 M2779,15.5 L2798,15.5"/></g><text x="2824" y="15" font-family="Liberation Sans,sans-serif" font-weight="700" font-size="42" fill="#3f3f3f">?</text></svg>
<svg class="abs" style="left:2360px;top:951px" width="520" height="52" viewBox="2360 -26 520 52"><g fill="none" stroke="#4c4c4c" stroke-width="2" stroke-linejoin="round"><g stroke="#1a7bf0" stroke-width="2.2"><path d="M2404,-15 L2422,-5 L2404,5 L2386,-5 Z" fill="#f4f4f4"/><path d="M2391.5,-0.5 L2386,3 L2404,13.5 L2422,3 L2416.5,-0.5"/></g><g stroke="#4c4c4c" stroke-width="2.2"><circle cx="2452.4" cy="0" r="17"/><circle cx="2452.4" cy="0" r="9.5"/></g><path d="M2491,-14 L2503,-14 L2511,-6 L2511,12 L2491,12 Z M2503,-14 L2503,-6 L2511,-6"/><path d="M2533,-8 L2550,-15 L2562,-9 L2562,8 L2546,16 L2533,8 Z M2533,-8 L2546,-2 L2562,-9 M2546,-2 L2546,16"/><path d="M2579,-8 Q2579,-10 2581,-10 L2587,-10 L2590,-14 L2603,-14 L2606,-10 L2612,-10 Q2614,-10 2614,-8 L2614,11 Q2614,13 2612,13 L2581,13 Q2579,13 2579,11 Z"/><circle cx="2596.5" cy="2" r="9"/><circle cx="2596.5" cy="2" r="5.2"/><g stroke="#8a8a8a" stroke-width="1.2"><path d="M2641,-12 L2662,-6 L2648,10 L2627,3 Z M2636,-7 L2657,-1 M2632,-2 L2653,4.5 M2648,-10 L2634,5 M2655,-8 L2641,7.5"/></g><path d="M2650,-7 L2646.5,-1.5 L2654,0.5" stroke="#222" stroke-width="2.2"/><path d="M2686,-13 L2708,-13 Q2711,-12 2709,-9 L2704,-9 L2700,12 Q2699,15 2695,15 L2678,15 Q2675,13 2678,10 L2683,10 L2686,-13 M2683,10 L2694,10 Q2697,12 2695,15 M2704,-9 Q2702,-12 2705,-13"/><rect x="2723.5" y="-14" width="32" height="27"/><path d="M2724,-13 L2730,-13" stroke-width="3"/><rect x="2772" y="-14" width="33" height="24" rx="2"/><rect x="2775.5" y="-10.5" width="26" height="17" stroke-width="1.5"/><path d="M2785,10 L2783,15 M2792,10 L2794,15 M2779,15.5 L2798,15.5"/></g><text x="2824" y="15" font-family="Liberation Sans,sans-serif" font-weight="700" font-size="42" fill="#3f3f3f">?</text></svg>
<div class="abs" style="left:0px;top:1736px;width:2880px;height:55.5px;background:linear-gradient(#dedede,#cfcfcf);border-radius:0 0 10px 10px"></div>
<div class="abs" style="left:0px;top:1736px;width:2880px;height:1px;background:#b5b5b5"></div>
<svg class="abs" style="left:9px;top:1752px" width="30" height="28" viewBox="0 0 30 28"><path d="M0,2.5H28M0,9H28M0,15.5H28M0,22H28" stroke="#5a5a5a" stroke-width="1.5"/></svg>
<span id="t_66" class="t" style="left:42.8px;top:1751.2px;font-size:25px;font-weight:400;color:#111;letter-spacing:-1.633px;">Command:</span>
<span id="t_67" class="t" style="left:172.0px;top:1751.2px;font-size:25px;font-weight:400;color:#111;letter-spacing:-1.167px;">_Delete</span>
<div class="abs" style="left:2006.5px;top:1751px;width:139px;height:30px;border-radius:7px;border:1.5px solid #8f8f8f;box-sizing:border-box;background:linear-gradient(#ededed,#dedede)"></div>
<span id="t_68" class="t" style="left:2020.0px;top:1751.2px;font-size:25px;font-weight:400;color:#111;letter-spacing:-1.167px;">CPlane</span>
<svg class="abs" style="left:2118px;top:1754px" width="20" height="24" viewBox="0 0 20 24"><path d="M4.5,9.5 L10,4 L15.5,9.5 M4.5,14.5 L10,20 L15.5,14.5" fill="none" stroke="#555" stroke-width="1.8"/></svg>
<span id="t_69" class="t" style="left:2173.7px;top:1751.8px;font-size:24px;font-weight:400;color:#111;letter-spacing:-0.468px;">X: -0.34</span>
<span id="t_70" class="t" style="left:2338.5px;top:1751.8px;font-size:24px;font-weight:400;color:#111;letter-spacing:-0.897px;">Y: 14.34</span>
<span id="t_71" class="t" style="left:2508.0px;top:1751.8px;font-size:24px;font-weight:400;color:#111;letter-spacing:-0.631px;">Z: 0.00</span>
</body></html>
